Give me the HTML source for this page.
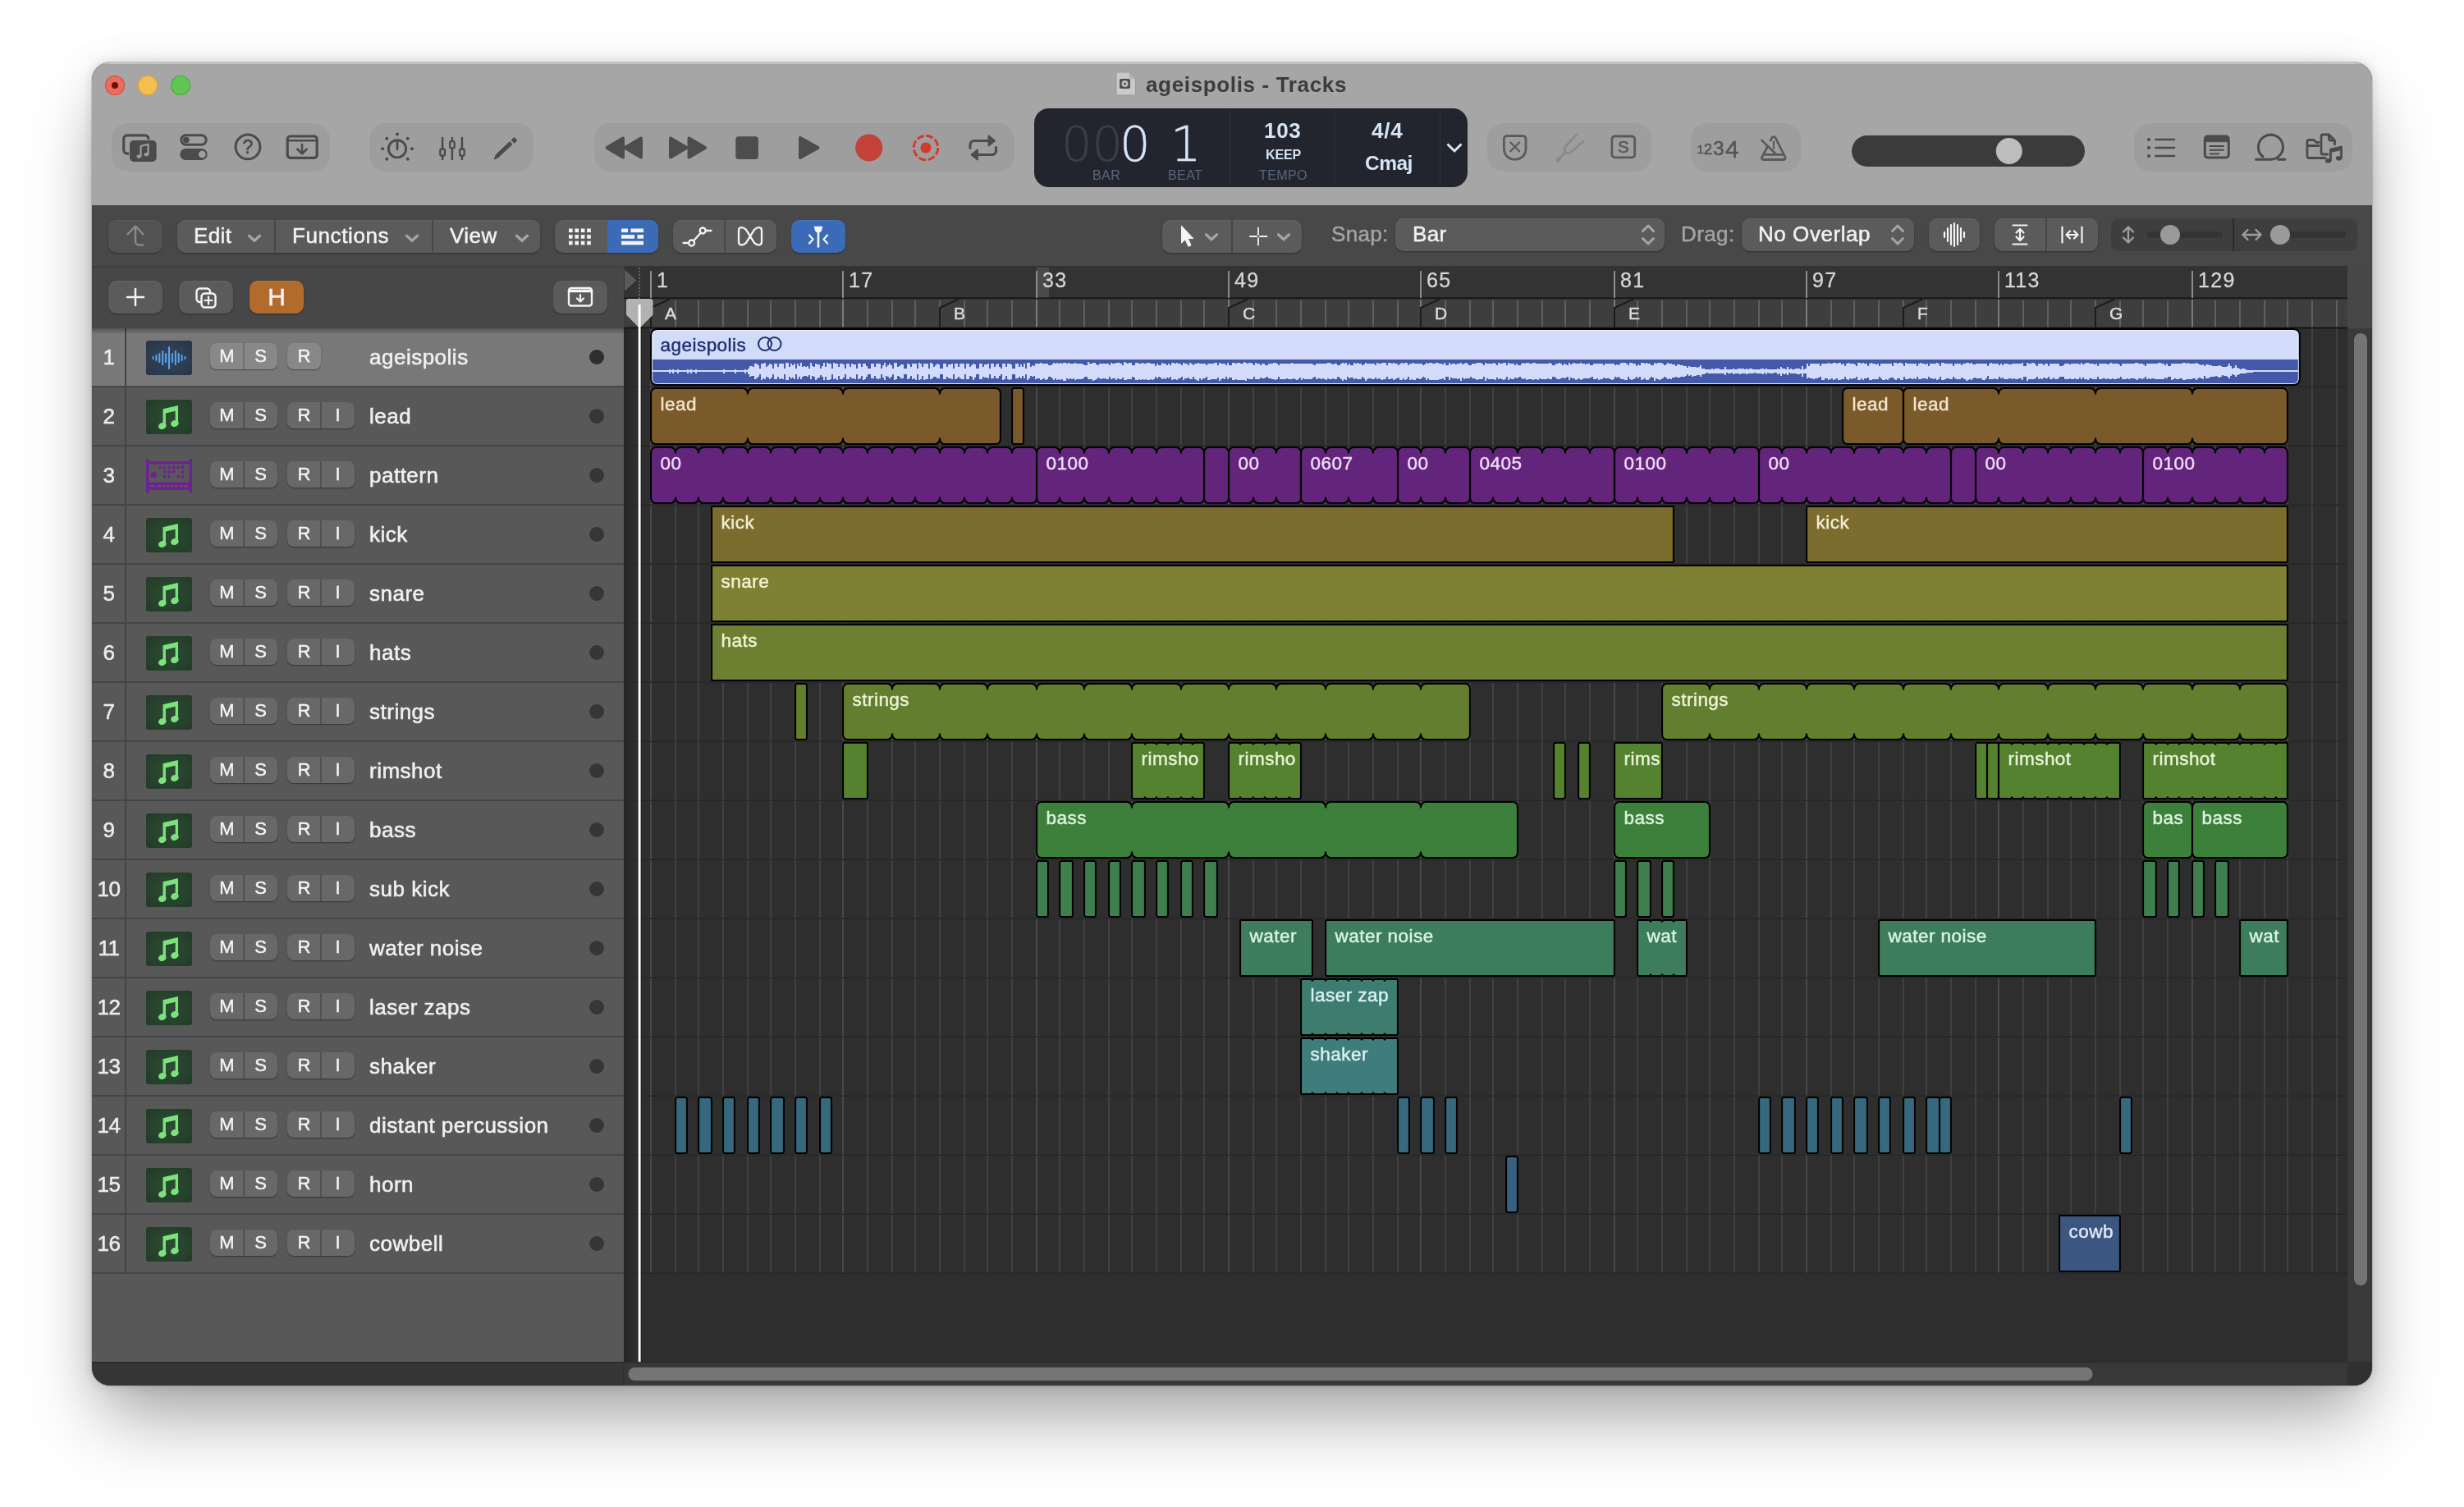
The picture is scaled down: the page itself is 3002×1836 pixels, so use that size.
<!DOCTYPE html>
<html lang="en"><head><meta charset="utf-8"><title>ageispolis - Tracks</title>
<style>
html,body{margin:0;padding:0;}
body{width:3002px;height:1836px;background:#fff;overflow:hidden;position:relative;font-family:"Liberation Sans",sans-serif;}
.win{position:absolute;left:112px;top:76px;width:2778px;height:1612px;border-radius:22px;overflow:hidden;background:#2e2e2e;
 box-shadow:0 0 0 1px rgba(0,0,0,.13),0 0 14px rgba(0,0,0,.15),0 6px 56px rgba(0,0,0,.07),0 50px 90px -12px rgba(0,0,0,.34);}
.inner{will-change:transform;position:absolute;left:-112px;top:-76px;width:3002px;height:1836px;}
.abs{position:absolute;}
.inner div,.inner svg,.inner span{position:absolute;box-sizing:border-box;}
.tb1{left:112px;top:76px;width:2778px;height:174px;background:#a6a6a6;}
.tb1 .hl{left:0;top:0;width:100%;height:2px;background:#c4c4c4;}
.grp{background:#9e9e9e;border-radius:20px;height:59px;top:150px;}
.tl{width:24px;height:24px;border-radius:50%;top:92px;}
.title{top:85px;left:1396px;font-weight:bold;font-size:26px;color:#3c3c3c;white-space:nowrap;line-height:36px;letter-spacing:.65px;}
.lcd{left:1260px;top:132px;width:528px;height:96px;border-radius:18px;background:#22242e;}
.lcd .dv{top:2px;width:1px;height:92px;background:#2f323e;}
.lcd span{white-space:nowrap;color:#d6e4f8;}
.lcd .lab{font-size:16px;color:#5b667b;top:72px;line-height:20px;letter-spacing:.4px;}
.big{-webkit-text-stroke:.5px;font-size:59px;line-height:60px;top:14px;font-family:"DejaVu Sans Light","DejaVu Sans","Liberation Sans",sans-serif;font-weight:200;}
.tb2{left:112px;top:250px;width:2778px;height:74px;background:#484848;}
.tb3{left:112px;top:324px;width:648px;height:76px;background:#474747;border-top:2px solid #3e3e3e;}
.btn{background:#5b5b5b;border-radius:10px;height:40px;top:268px;box-shadow:0 1px 2px rgba(0,0,0,.35),inset 0 1px 0 rgba(255,255,255,.06);}
.btn .dv{top:0;width:2px;height:100%;background:#474747;}
.btn span,.lbl{-webkit-text-stroke:.5px;color:#f2f2f2;font-size:26px;line-height:40px;white-space:nowrap;top:-1px;}
.lbl{color:#a3a3a3;top:266px;}
.blue{background:#3b6bb6;}
.hdr{left:112px;top:400px;width:648px;height:1259px;background:#585858;}
.row{left:112px;width:648px;height:72px;border-bottom:2px solid #454545;}
.row.sel{background:#787878;}
.num{-webkit-text-stroke:.55px;left:-.5px;width:42px;top:0;height:70px;text-align:center;color:#ececec;font-size:26px;line-height:70px;letter-spacing:-.5px;}
.vline{left:40px;top:0;width:2px;height:70px;background:#434343;}
.ico{left:66px;top:15px;width:56px;height:42px;border-radius:3px;}
.ms{top:18px;height:32px;border-radius:8px;background:#686868;box-shadow:0 1px 1.5px rgba(0,0,0,.4);}
.sel .ms{background:#888;}
.ms i{position:absolute;font-style:normal;top:0;width:41px;text-align:center;color:#f4f4f4;font-size:22px;line-height:32px;-webkit-text-stroke:.45px;}
.ms b{position:absolute;top:0;width:2px;height:32px;background:#525252;}
.sel .ms b{background:#707070;}
.nm{-webkit-text-stroke:.55px;left:338px;top:0;color:#f0f0f0;font-size:26px;line-height:70px;white-space:nowrap;letter-spacing:.5px;}
.dot{left:606px;top:26px;width:18px;height:18px;border-radius:50%;background:#363636;}
.sel .dot{background:#2e2e2e;}
svg{overflow:visible;}
svg text{font-family:"Liberation Sans",sans-serif;}
.icoA{background:radial-gradient(ellipse at center,#34465f 0%,#283445 100%);}
.icoN{background:radial-gradient(ellipse at center,#2b4d33 0%,#233a28 100%);}
.hdr .sh{left:0;top:0;width:100%;height:7px;background:linear-gradient(rgba(0,0,0,.28),rgba(0,0,0,0));}

</style></head>
<body>
<div class="win"><div class="inner">
<div class="tb1"><div class="hl"></div></div>
<div class="tl" style="left:128px;background:#ec6a5e;box-shadow:inset 0 0 0 1px #d1503f"></div><div class="tl" style="left:168px;background:#f5bf4f;box-shadow:inset 0 0 0 1px #d9a13a"></div><div class="tl" style="left:208px;background:#61c554;box-shadow:inset 0 0 0 1px #4aa73c"></div><div style="left:136px;top:100px;width:8px;height:8px;border-radius:50%;background:#6a0f09"></div>
<svg style="left:1359px;top:87px" width="26" height="30" viewBox="0 0 26 30"><path d="M2.5 1h14l8 8v18.500a1.500 1.500 0 0 1-1.500 1.500h-20.500a1.500 1.500 0 0 1-1.500-1.500v-25a1.500 1.500 0 0 1 1.500-1.500z" fill="#c9c9c9" stroke="#999" stroke-width="1"/><path d="M16.500 1v6.500a1.500 1.500 0 0 0 1.500 1.500h6.500z" fill="#b4b4b4"/><rect x="5" y="9" width="13" height="12" rx="2" fill="#4d4d4d"/><circle cx="11.500" cy="15" r="4" fill="#bdbdbd"/><circle cx="11.500" cy="15" r="1.500" fill="#555"/></svg><div class="title">ageispolis - Tracks</div>
<div class="grp" style="left:136px;width:266px"></div><div class="grp" style="left:450px;width:200px"></div><div class="grp" style="left:724px;width:512px"></div><div class="grp" style="left:1812px;width:200px"></div><div class="grp" style="left:2060px;width:134px"></div><div class="grp" style="left:2600px;width:266px"></div>
<svg style="left:0;top:0" width="3002" height="260" viewBox="0 0 3002 260" fill="none" stroke="#4b4b4b" stroke-width="3" stroke-linecap="round" stroke-linejoin="round">
<rect x="150.700" y="164.800" width="30.300" height="22.300" rx="4.500" stroke-width="3.200"/><rect x="157" y="170" width="34.600" height="28" rx="6" fill="#9e9e9e" stroke="none"/><rect x="158" y="171" width="32.600" height="26" rx="5" fill="#4b4b4b" stroke="none"/><path d="M171.500 190.500v-12.500l9-2.200v12" stroke="#9e9e9e" stroke-width="2.200"/><ellipse cx="169.300" cy="190.600" rx="2.700" ry="2.100" fill="#9e9e9e" stroke="none"/><ellipse cx="178.300" cy="188.200" rx="2.700" ry="2.100" fill="#9e9e9e" stroke="none"/><rect x="220.800" y="164.700" width="30.400" height="11.600" rx="5.800" stroke-width="3"/><circle cx="226.800" cy="170.500" r="3.800" fill="#4b4b4b" stroke="none"/><rect x="219.300" y="181" width="33.400" height="14" rx="7" fill="#4b4b4b" stroke="none"/><circle cx="246.300" cy="188" r="4.400" fill="#9e9e9e" stroke="none"/><circle cx="302" cy="178.900" r="14.900" stroke-width="3"/><text x="302" y="187.200" text-anchor="middle" font-size="23" fill="#4b4b4b" stroke="#4b4b4b" stroke-width=".7">?</text><rect x="350.200" y="166" width="36" height="26.300" rx="3.500" stroke-width="3.200"/><path d="M351 171.300h34.500" stroke-width="2.400"/><path d="M368 176v10.500M362.300 181.700l5.700 5.500 5.700-5.500" stroke-width="2.600"/><circle cx="484" cy="181.300" r="10.600" stroke-width="2.900"/><path d="M484 172.800v9" stroke-width="2.800"/><circle cx="484.0" cy="163.6" r="2" fill="#4b4b4b" stroke="none"/><circle cx="496.7" cy="168.8" r="2" fill="#4b4b4b" stroke="none"/><circle cx="501.9" cy="181.3" r="2" fill="#4b4b4b" stroke="none"/><circle cx="496.7" cy="193.8" r="2" fill="#4b4b4b" stroke="none"/><circle cx="471.3" cy="193.8" r="2" fill="#4b4b4b" stroke="none"/><circle cx="466.1" cy="181.3" r="2" fill="#4b4b4b" stroke="none"/><circle cx="471.3" cy="168.8" r="2" fill="#4b4b4b" stroke="none"/><path d="M539.1 168v26" stroke-width="2.500"/><rect x="536.3" y="181.5" width="5.600" height="8.200" rx="2" fill="#9e9e9e" stroke-width="2.300"/><path d="M550.9 168v26" stroke-width="2.500"/><rect x="548.1" y="172.2" width="5.600" height="8.200" rx="2" fill="#9e9e9e" stroke-width="2.300"/><path d="M562.9 168v26" stroke-width="2.500"/><rect x="560.1" y="181.5" width="5.600" height="8.200" rx="2" fill="#9e9e9e" stroke-width="2.300"/><path d="M602.300 193.800l2-5.400 16.800-15.800 3 3.200-16.800 15.800z" fill="#4b4b4b" stroke-width="1"/><path d="M623.300 170.400l2.400-2.200a1 1 0 0 1 1.400 0l2.200 2.300a1 1 0 0 1 0 1.400l-2.400 2.200z" fill="#4b4b4b" stroke-width="1"/><g fill="#4d4d4d" stroke="#4d4d4d" stroke-width="4"><path d="M739.5 180.0L759.0 168.5L759.0 191.5z"/><path d="M761.5 180.0L781.0 168.5L781.0 191.5z"/><path d="M836.5 180.0L817.0 168.5L817.0 191.5z"/><path d="M859.0 180.0L839.5 168.5L839.5 191.5z"/><rect x="898.300" y="168.300" width="23.600" height="23.600" rx="1.500"/><path d="M996.5 180.0L975.0 168.0L975.0 192.0z"/></g><circle cx="1058.700" cy="180" r="16.600" fill="#c34238" stroke="none"/><circle cx="1128" cy="180" r="14.800" stroke="#d6392c" stroke-width="3" stroke-dasharray="8.800 2.800" stroke-linecap="butt"/><circle cx="1128" cy="180" r="6.600" fill="#d6392c" stroke="none"/><path d="M1182 180.500v-4a5 5 0 0 1 5-5h18" stroke="#4d4d4d" stroke-width="3.200"/><path d="M1204.500 165.500l7.500 6-7.500 6z" fill="#4d4d4d" stroke="#4d4d4d" stroke-width="2"/><path d="M1213.500 179.500v4a5 5 0 0 1-5 5h-18" stroke="#4d4d4d" stroke-width="3.200"/><path d="M1191 182.500l-7.500 6 7.500 6z" fill="#4d4d4d" stroke="#4d4d4d" stroke-width="2"/><g stroke="#5a5a5a" stroke-width="3"><path d="M1836 165.600h19.400a3.600 3.600 0 0 1 3.600 3.600v12c0 8-6 13-13.300 13s-13.300-5-13.300-13v-12a3.600 3.600 0 0 1 3.600-3.600z" stroke-width="2.800"/><path d="M1840.300 173.500l10.800 10.800M1851.100 173.500l-10.800 10.800" stroke-width="2.300"/><rect x="1963.900" y="166" width="27.800" height="25.800" rx="3.500" stroke-width="2.800"/></g><text x="1977.800" y="186.300" text-anchor="middle" font-size="20.500" fill="#5a5a5a" stroke="#5a5a5a" stroke-width=".7">S</text><g stroke="#8a8a8a" stroke-width="2.800"><path d="M1921.100 163.500l-13.300 14.500c-1.500 1.700-1.700 3-1.600 4.500l.3 3.200 3.500.8c1.500.3 3 0 4.500-1.500l14.600-12.800"/><path d="M1906.500 185.800l-7.500 8" stroke-width="3.200"/><circle cx="1898" cy="195" r="2.700" fill="#8a8a8a" stroke="none"/></g><g fill="#555" stroke="#555" stroke-width=".5"><text x="2067.500" y="186.600" font-size="15">1</text><text x="2075.800" y="187.700" font-size="18.700">2</text><text x="2087" y="188.800" font-size="24.600">3</text><text x="2102" y="191.700" font-size="29.700">4</text></g><g stroke="#5a5a5a" stroke-width="2.800"><path d="M2153.500 178.500l-6.800 13a2 2 0 0 0 1.800 3h24.600a2 2 0 0 0 1.800-3l-11.700-23.500a2.500 2.500 0 0 0-4.500 0l-1.500 3"/><path d="M2149.500 188.300h23.500"/><path d="M2161 172.500v8.500" stroke-width="2.200"/><path d="M2146.500 171l17.500 17" stroke-width="2.600"/></g><rect x="2256" y="165" width="284" height="38" rx="19" fill="#3b3b3b" stroke="none"/><circle cx="2447.800" cy="184" r="16" fill="#bdbdbd" stroke="none"/><g stroke="#4b4b4b" stroke-width="3"><circle cx="2618" cy="170" r="2.100" fill="#4b4b4b" stroke="none"/><path d="M2626.500 170h22.500" stroke-width="2.700"/><circle cx="2618" cy="180" r="2.100" fill="#4b4b4b" stroke="none"/><path d="M2626.500 180h22.500" stroke-width="2.700"/><circle cx="2618" cy="190" r="2.100" fill="#4b4b4b" stroke="none"/><path d="M2626.500 190h22.500" stroke-width="2.700"/><rect x="2686.300" y="166" width="29" height="26" rx="3.500"/><path d="M2686.300 172.300v-2.800a3.500 3.500 0 0 1 3.500-3.500h22a3.500 3.500 0 0 1 3.500 3.500v2.800z" fill="#4b4b4b" stroke-width="1"/><path d="M2692.500 178h16.500M2692.500 182.700h16.500M2692.500 187.400h10.500" stroke-width="2"/><path d="M2748.500 194.200H2765.600A15 15 0 1 0 2757 190.900M2775.500 194.200h8.500" stroke-width="3"/><path d="M2811 177.500v-5a2 2 0 0 1 2-2h6l3 3h3M2811 177.500h14M2811 177.500v13a2 2 0 0 0 2 2h20" stroke-width="2.800"/><path d="M2828 186v-20a2 2 0 0 1 2-2h7.500l7 7v5M2837.500 164v5a2 2 0 0 0 2 2h5M2828 186a2 2 0 0 0 2 2h6" stroke-width="2.800"/><path d="M2839.500 195.500v-13.500l13-3v13.500" stroke-width="2.800"/><path d="M2839.500 182.500l13-3v3l-13 3z" fill="#4b4b4b" stroke-width="1"/><ellipse cx="2836.500" cy="195.800" rx="3.600" ry="2.800" fill="#4b4b4b" stroke="none"/><ellipse cx="2849.500" cy="192.800" rx="3.600" ry="2.800" fill="#4b4b4b" stroke="none"/></g></svg>
<div class="lcd"><div class="dv" style="left:238px"></div><div class="dv" style="left:366px"></div><div class="dv" style="left:494px"></div><span class="big" style="left:33px;color:#3a3e4c">00</span><span class="big" style="left:104px">0</span><span class="big" style="left:166px">1</span><span class="lab" style="left:71px">BAR</span><span class="lab" style="left:163px">BEAT</span><span class="lab" style="left:274px">TEMPO</span><span style="left:280px;top:12px;font-size:26px;font-weight:bold;line-height:30px;letter-spacing:.7px">103</span><span style="left:282px;top:47px;font-size:16px;font-weight:bold;line-height:20px;letter-spacing:-.1px">KEEP</span><span style="left:411px;top:12px;font-size:26px;font-weight:bold;line-height:30px;letter-spacing:.8px">4/4</span><span style="left:403px;top:52px;font-size:24.500px;font-weight:bold;line-height:30px;letter-spacing:-.5px">Cmaj</span><svg style="left:501px;top:40px" width="22" height="16" viewBox="0 0 22 16"><path d="M2.500 3.500l8.500 8.500 8.500-8.500" fill="none" stroke="#d6e4f8" stroke-width="3"/></svg></div>
<div class="tb2"></div><div class="tb3"></div>
<div class="btn" style="left:132px;width:66px;background:#525252"></div><div class="btn" style="left:216px;width:442px"><div class="dv" style="left:118px"></div><div class="dv" style="left:310px"></div><span style="left:20px;letter-spacing:.4px">Edit</span><span style="left:140px;letter-spacing:.6px">Functions</span><span style="left:332px;letter-spacing:.45px">View</span></div><div class="btn" style="left:676px;width:126px"><div class="blue" style="left:64px;top:0;width:62px;height:40px;border-radius:0 10px 10px 0"></div></div><div class="btn" style="left:820px;width:126px"><div class="dv" style="left:62px"></div></div><div class="btn blue" style="left:964px;width:66px"></div><div class="btn" style="left:1416px;width:170px"><div class="dv" style="left:84px"></div></div><span class="lbl" style="left:1622px;letter-spacing:.3px;top:264.500px">Snap:</span><div class="btn" style="left:1700px;width:328px;top:266px"><span style="left:21px;letter-spacing:.4px">Bar</span></div><span class="lbl" style="left:2048px;letter-spacing:.4px;top:264.500px">Drag:</span><div class="btn" style="left:2122px;width:210px;top:266px"><span style="left:20px;letter-spacing:.55px">No Overlap</span></div><div class="btn" style="left:2350px;width:62px;top:266px"></div><div class="btn" style="left:2430px;width:126px;top:266px"><div class="dv" style="left:62px"></div></div><div style="left:2572px;top:266px;width:300px;height:40px;border-radius:10px;background:#3e3e3e"><div style="left:148px;top:0;width:2px;height:40px;background:#2c2c2c"></div><div style="left:44px;top:16px;width:92px;height:8px;border-radius:4px;background:#343434"></div><div style="left:194px;top:16px;width:92px;height:8px;border-radius:4px;background:#343434"></div><div style="left:60px;top:8px;width:24px;height:24px;border-radius:50%;background:#9a9a9a"></div><div style="left:194px;top:8px;width:24px;height:24px;border-radius:50%;background:#9a9a9a"></div></div>
<div class="btn" style="left:132px;width:66px;top:342px"></div><div class="btn" style="left:218px;width:66px;top:342px"></div><div class="btn" style="left:304px;width:66px;top:342px;background:#b36b2d"><span style="left:0;width:66px;text-align:center;font-size:30px;top:0">H</span></div><div class="btn" style="left:674px;width:66px;top:342px"></div>
<svg style="left:0;top:0" width="3002" height="400" viewBox="0 0 3002 400" fill="none" stroke="#f4f4f4" stroke-width="2.600" stroke-linecap="round" stroke-linejoin="round">
<path d="M155.500 285.500l9.500-10 9.500 10M165 276.500v17.500a4.500 4.500 0 0 0 4.500 4.500h4.500" stroke="#8a8a8a" stroke-width="2.400"/><path d="M303.5 287.2l6.5 6.0 6.5 -6.0" stroke="#a5a5a5" stroke-width="3.2" fill="none"/><path d="M495.5 287.2l6.5 6.0 6.5 -6.0" stroke="#a5a5a5" stroke-width="3.2" fill="none"/><path d="M629.5 287.2l6.5 6.0 6.5 -6.0" stroke="#a5a5a5" stroke-width="3.2" fill="none"/><rect x="693.0" y="278.5" width="4.600" height="4.600" fill="#f4f4f4" stroke="none"/><rect x="700.4" y="278.5" width="4.600" height="4.600" fill="#f4f4f4" stroke="none"/><rect x="707.8" y="278.5" width="4.600" height="4.600" fill="#f4f4f4" stroke="none"/><rect x="715.2" y="278.5" width="4.600" height="4.600" fill="#f4f4f4" stroke="none"/><rect x="693.0" y="286.1" width="4.600" height="4.600" fill="#f4f4f4" stroke="none"/><rect x="700.4" y="286.1" width="4.600" height="4.600" fill="#f4f4f4" stroke="none"/><rect x="707.8" y="286.1" width="4.600" height="4.600" fill="#f4f4f4" stroke="none"/><rect x="715.2" y="286.1" width="4.600" height="4.600" fill="#f4f4f4" stroke="none"/><rect x="693.0" y="293.7" width="4.600" height="4.600" fill="#f4f4f4" stroke="none"/><rect x="700.4" y="293.7" width="4.600" height="4.600" fill="#f4f4f4" stroke="none"/><rect x="707.8" y="293.7" width="4.600" height="4.600" fill="#f4f4f4" stroke="none"/><rect x="715.2" y="293.7" width="4.600" height="4.600" fill="#f4f4f4" stroke="none"/><rect x="757.0" y="278.5" width="8.0" height="4.600" fill="#f4f4f4" stroke="none"/><rect x="768.5" y="278.5" width="15.5" height="4.600" fill="#f4f4f4" stroke="none"/><rect x="757.0" y="286.1" width="16.0" height="4.600" fill="#f4f4f4" stroke="none"/><rect x="776.5" y="286.1" width="7.5" height="4.600" fill="#f4f4f4" stroke="none"/><rect x="757.0" y="293.7" width="27.0" height="4.600" fill="#f4f4f4" stroke="none"/><path d="M832.500 296h6.500M845.100 293.200l8.600-9.500M859.800 281h6.700" stroke-width="2.300"/><circle cx="842.600" cy="296" r="3.500" stroke-width="2.300"/><circle cx="856.200" cy="281" r="3.500" stroke-width="2.300"/><path d="M900 281C900 276 905 276.300 909 279.800L919 295.800C923 299.300 928 299.600 928 294.600V281C928 276 923 276.300 919 279.800L909 295.800C905 299.300 900 299.600 900 294.600Z" stroke-width="2.300"/><path d="M992.500 276.500h9l-1.500 5-3 2-3-2z" fill="#f4f4f4" stroke-width="1.500"/><path d="M997 283v17.500" stroke-width="2.600"/><path d="M986 286.500l4.500 5-4.500 5M1008 286.500l-4.500 5 4.500 5" stroke-width="2.200"/><path d="M1439.500 275.500v20.500l4.600-4.300 3.800 8.600 3.200-1.500-3.800-8.400h6.200z" fill="#f4f4f4" stroke-width="1"/><path d="M1469.5 285.8l6.5 6.0 6.5 -6.0" stroke="#a5a5a5" stroke-width="3.2" fill="none"/><path d="M1533 277.500v8.500M1533 290v8.500M1523 288h8M1535 288h8.500" stroke-width="1.800"/><path d="M1557.5 285.8l6.5 6.0 6.5 -6.0" stroke="#a5a5a5" stroke-width="3.2" fill="none"/><path d="M2001.5 281.5l6.500 -6.500 6.500 6.500M2001.5 290.5l6.500 6.500 6.500 -6.500" stroke="#a5a5a5" stroke-width="3" fill="none"/><path d="M2305.5 281.5l6.500 -6.500 6.500 6.500M2305.5 290.5l6.500 6.500 6.500 -6.500" stroke="#a5a5a5" stroke-width="3" fill="none"/><path d="M2369.0 283.0v6.0" stroke-width="2.200"/><path d="M2373.0 278.0v16.0" stroke-width="2.200"/><path d="M2377.0 274.0v24.0" stroke-width="2.200"/><path d="M2381.0 272.0v28.0" stroke-width="2.200"/><path d="M2385.0 274.0v24.0" stroke-width="2.200"/><path d="M2389.0 278.0v16.0" stroke-width="2.200"/><path d="M2393.0 283.0v6.0" stroke-width="2.200"/><path d="M2452.500 274.500h17M2452.500 297.500h17" stroke-width="2.200"/><path d="M2461 279.500v13M2456.500 283.500l4.500-4.500 4.500 4.500M2456.500 288.500l4.500 4.500 4.500-4.500" stroke-width="2.200"/><path d="M2512.500 276.500v19M2536.500 276.500v19" stroke-width="2.200"/><path d="M2518 286h13M2522 281.500l-4.500 4.500 4.500 4.500M2527 281.500l4.500 4.500-4.500 4.500" stroke-width="2.200"/><g stroke="#9e9e9e" stroke-width="2.400"><path d="M2593 277v18M2587 282.500l6-6 6 6M2587 289.500l6 6 6-6"/><path d="M2733 286h21M2738.500 280l-6 6 6 6M2748.500 280l6 6-6 6"/></g><path d="M165 352v20M155 362h20" stroke-width="2.500"/><rect x="239.500" y="351.500" width="16.500" height="16.500" rx="4" stroke-width="2.400"/><rect x="245.500" y="357.500" width="17" height="17" rx="4" fill="#5b5b5b" stroke-width="2.400"/><path d="M254 361.500v9M249.500 366h9" stroke-width="2.200"/><rect x="693" y="351" width="28" height="21.500" rx="3" stroke-width="2.400"/><path d="M693.500 354.500h27" stroke-width="3.600"/><path d="M707 359v8M703 363.500l4 4 4-4" stroke-width="2.200"/></svg>
<div class="hdr"></div>
<div style="left:112px;top:1659px;width:648px;height:29px;background:#363636;border-top:2px solid #2c2c2c"></div><div class="row sel" style="top:400px"><div class="num">1</div><div class="vline"></div><svg class="ico icoA" viewBox="0 0 56 42"><g stroke="#5aa4ee" stroke-width="2" stroke-linecap="round"><path d="M8.5 20.0v2.0"/><path d="M12.4 18.0v6.0"/><path d="M16.3 16.0v10.0"/><path d="M20.2 13.0v16.0"/><path d="M24.1 16.0v10.0"/><path d="M28.0 8.0v26.0"/><path d="M31.9 16.0v10.0"/><path d="M35.8 13.0v16.0"/><path d="M39.7 16.0v10.0"/><path d="M43.6 18.0v6.0"/><path d="M47.5 20.0v2.0"/></g></svg><div class="ms" style="left:144px;width:82px"><i style="left:0">M</i><b style="left:40px"></b><i style="left:41px">S</i></div><div class="ms" style="left:238px;width:41px"><i style="left:0">R</i></div><div class="nm">ageispolis</div><div class="dot"></div></div>
<div class="row" style="top:472px"><div class="num">2</div><div class="vline"></div><svg class="ico icoN" viewBox="0 0 56 42"><g fill="#7ce27b"><path d="M20.500 11.200l18.500-4.200v22.200h-3.400v-15.400l-11.700 2.700v15.700h-3.400z"/><ellipse cx="19.800" cy="32" rx="4.900" ry="3.900" transform="rotate(-18 19.800 32)"/><ellipse cx="34.900" cy="29" rx="4.900" ry="3.900" transform="rotate(-18 34.900 29)"/></g></svg><div class="ms" style="left:144px;width:82px"><i style="left:0">M</i><b style="left:40px"></b><i style="left:41px">S</i></div><div class="ms" style="left:238px;width:82px"><i style="left:0">R</i><b style="left:40px"></b><i style="left:41px">I</i></div><div class="nm">lead</div><div class="dot"></div></div>
<div class="row" style="top:544px"><div class="num">3</div><div class="vline"></div><svg class="ico" viewBox="0 0 56 42"><g fill="#6e2291"><rect x="0" y="0.500" width="3.600" height="41"/><rect x="52.400" y="0.500" width="3.600" height="41"/><rect x="0" y="3" width="56" height="3.400"/><rect x="0" y="28.500" width="56" height="9.500"/><circle cx="9.500" cy="19.500" r="3.800"/><circle cx="17.0" cy="10.5" r="1.900"/><circle cx="22.5" cy="10.5" r="1.900"/><circle cx="28.0" cy="10.5" r="1.900"/><circle cx="33.5" cy="10.5" r="1.900"/><circle cx="39.0" cy="10.5" r="1.900"/><circle cx="44.5" cy="10.5" r="1.900"/><circle cx="22.5" cy="16.0" r="1.900"/><circle cx="28.0" cy="16.0" r="1.900"/><circle cx="33.5" cy="15.5" r="1.900"/><circle cx="44.5" cy="16.0" r="1.900"/><circle cx="22.5" cy="21.5" r="1.900"/><circle cx="28.0" cy="21.5" r="1.900"/><circle cx="39.0" cy="21.5" r="1.900"/><circle cx="44.5" cy="21.5" r="1.900"/></g><g fill="#585858"><rect x="5" y="32" width="5.500" height="2.600"/><rect x="14.5" y="32" width="3.400" height="2.600"/><rect x="19.7" y="32" width="3.400" height="2.600"/><rect x="24.9" y="32" width="3.400" height="2.600"/><rect x="30.1" y="32" width="3.400" height="2.600"/><rect x="35.3" y="32" width="3.400" height="2.600"/><rect x="40.5" y="32" width="3.400" height="2.600"/><rect x="45.500" y="32" width="5.500" height="2.600"/></g></svg><div class="ms" style="left:144px;width:82px"><i style="left:0">M</i><b style="left:40px"></b><i style="left:41px">S</i></div><div class="ms" style="left:238px;width:82px"><i style="left:0">R</i><b style="left:40px"></b><i style="left:41px">I</i></div><div class="nm">pattern</div><div class="dot"></div></div>
<div class="row" style="top:616px"><div class="num">4</div><div class="vline"></div><svg class="ico icoN" viewBox="0 0 56 42"><g fill="#7ce27b"><path d="M20.500 11.200l18.500-4.200v22.200h-3.400v-15.400l-11.700 2.700v15.700h-3.400z"/><ellipse cx="19.800" cy="32" rx="4.900" ry="3.900" transform="rotate(-18 19.800 32)"/><ellipse cx="34.900" cy="29" rx="4.900" ry="3.900" transform="rotate(-18 34.900 29)"/></g></svg><div class="ms" style="left:144px;width:82px"><i style="left:0">M</i><b style="left:40px"></b><i style="left:41px">S</i></div><div class="ms" style="left:238px;width:82px"><i style="left:0">R</i><b style="left:40px"></b><i style="left:41px">I</i></div><div class="nm">kick</div><div class="dot"></div></div>
<div class="row" style="top:688px"><div class="num">5</div><div class="vline"></div><svg class="ico icoN" viewBox="0 0 56 42"><g fill="#7ce27b"><path d="M20.500 11.200l18.500-4.200v22.200h-3.400v-15.400l-11.700 2.700v15.700h-3.400z"/><ellipse cx="19.800" cy="32" rx="4.900" ry="3.900" transform="rotate(-18 19.800 32)"/><ellipse cx="34.900" cy="29" rx="4.900" ry="3.900" transform="rotate(-18 34.900 29)"/></g></svg><div class="ms" style="left:144px;width:82px"><i style="left:0">M</i><b style="left:40px"></b><i style="left:41px">S</i></div><div class="ms" style="left:238px;width:82px"><i style="left:0">R</i><b style="left:40px"></b><i style="left:41px">I</i></div><div class="nm">snare</div><div class="dot"></div></div>
<div class="row" style="top:760px"><div class="num">6</div><div class="vline"></div><svg class="ico icoN" viewBox="0 0 56 42"><g fill="#7ce27b"><path d="M20.500 11.200l18.500-4.200v22.200h-3.400v-15.400l-11.700 2.700v15.700h-3.400z"/><ellipse cx="19.800" cy="32" rx="4.900" ry="3.900" transform="rotate(-18 19.800 32)"/><ellipse cx="34.900" cy="29" rx="4.900" ry="3.900" transform="rotate(-18 34.900 29)"/></g></svg><div class="ms" style="left:144px;width:82px"><i style="left:0">M</i><b style="left:40px"></b><i style="left:41px">S</i></div><div class="ms" style="left:238px;width:82px"><i style="left:0">R</i><b style="left:40px"></b><i style="left:41px">I</i></div><div class="nm">hats</div><div class="dot"></div></div>
<div class="row" style="top:832px"><div class="num">7</div><div class="vline"></div><svg class="ico icoN" viewBox="0 0 56 42"><g fill="#7ce27b"><path d="M20.500 11.200l18.500-4.200v22.200h-3.400v-15.400l-11.700 2.700v15.700h-3.400z"/><ellipse cx="19.800" cy="32" rx="4.900" ry="3.900" transform="rotate(-18 19.800 32)"/><ellipse cx="34.900" cy="29" rx="4.900" ry="3.900" transform="rotate(-18 34.900 29)"/></g></svg><div class="ms" style="left:144px;width:82px"><i style="left:0">M</i><b style="left:40px"></b><i style="left:41px">S</i></div><div class="ms" style="left:238px;width:82px"><i style="left:0">R</i><b style="left:40px"></b><i style="left:41px">I</i></div><div class="nm">strings</div><div class="dot"></div></div>
<div class="row" style="top:904px"><div class="num">8</div><div class="vline"></div><svg class="ico icoN" viewBox="0 0 56 42"><g fill="#7ce27b"><path d="M20.500 11.200l18.500-4.200v22.200h-3.400v-15.400l-11.700 2.700v15.700h-3.400z"/><ellipse cx="19.800" cy="32" rx="4.900" ry="3.900" transform="rotate(-18 19.800 32)"/><ellipse cx="34.900" cy="29" rx="4.900" ry="3.900" transform="rotate(-18 34.900 29)"/></g></svg><div class="ms" style="left:144px;width:82px"><i style="left:0">M</i><b style="left:40px"></b><i style="left:41px">S</i></div><div class="ms" style="left:238px;width:82px"><i style="left:0">R</i><b style="left:40px"></b><i style="left:41px">I</i></div><div class="nm">rimshot</div><div class="dot"></div></div>
<div class="row" style="top:976px"><div class="num">9</div><div class="vline"></div><svg class="ico icoN" viewBox="0 0 56 42"><g fill="#7ce27b"><path d="M20.500 11.200l18.500-4.200v22.200h-3.400v-15.400l-11.700 2.700v15.700h-3.400z"/><ellipse cx="19.800" cy="32" rx="4.900" ry="3.900" transform="rotate(-18 19.800 32)"/><ellipse cx="34.900" cy="29" rx="4.900" ry="3.900" transform="rotate(-18 34.900 29)"/></g></svg><div class="ms" style="left:144px;width:82px"><i style="left:0">M</i><b style="left:40px"></b><i style="left:41px">S</i></div><div class="ms" style="left:238px;width:82px"><i style="left:0">R</i><b style="left:40px"></b><i style="left:41px">I</i></div><div class="nm">bass</div><div class="dot"></div></div>
<div class="row" style="top:1048px"><div class="num">10</div><div class="vline"></div><svg class="ico icoN" viewBox="0 0 56 42"><g fill="#7ce27b"><path d="M20.500 11.200l18.500-4.200v22.200h-3.400v-15.400l-11.700 2.700v15.700h-3.400z"/><ellipse cx="19.800" cy="32" rx="4.900" ry="3.900" transform="rotate(-18 19.800 32)"/><ellipse cx="34.900" cy="29" rx="4.900" ry="3.900" transform="rotate(-18 34.900 29)"/></g></svg><div class="ms" style="left:144px;width:82px"><i style="left:0">M</i><b style="left:40px"></b><i style="left:41px">S</i></div><div class="ms" style="left:238px;width:82px"><i style="left:0">R</i><b style="left:40px"></b><i style="left:41px">I</i></div><div class="nm">sub kick</div><div class="dot"></div></div>
<div class="row" style="top:1120px"><div class="num">11</div><div class="vline"></div><svg class="ico icoN" viewBox="0 0 56 42"><g fill="#7ce27b"><path d="M20.500 11.200l18.500-4.200v22.200h-3.400v-15.400l-11.700 2.700v15.700h-3.400z"/><ellipse cx="19.800" cy="32" rx="4.900" ry="3.900" transform="rotate(-18 19.800 32)"/><ellipse cx="34.900" cy="29" rx="4.900" ry="3.900" transform="rotate(-18 34.900 29)"/></g></svg><div class="ms" style="left:144px;width:82px"><i style="left:0">M</i><b style="left:40px"></b><i style="left:41px">S</i></div><div class="ms" style="left:238px;width:82px"><i style="left:0">R</i><b style="left:40px"></b><i style="left:41px">I</i></div><div class="nm">water noise</div><div class="dot"></div></div>
<div class="row" style="top:1192px"><div class="num">12</div><div class="vline"></div><svg class="ico icoN" viewBox="0 0 56 42"><g fill="#7ce27b"><path d="M20.500 11.200l18.500-4.200v22.200h-3.400v-15.400l-11.700 2.700v15.700h-3.400z"/><ellipse cx="19.800" cy="32" rx="4.900" ry="3.900" transform="rotate(-18 19.800 32)"/><ellipse cx="34.900" cy="29" rx="4.900" ry="3.900" transform="rotate(-18 34.900 29)"/></g></svg><div class="ms" style="left:144px;width:82px"><i style="left:0">M</i><b style="left:40px"></b><i style="left:41px">S</i></div><div class="ms" style="left:238px;width:82px"><i style="left:0">R</i><b style="left:40px"></b><i style="left:41px">I</i></div><div class="nm">laser zaps</div><div class="dot"></div></div>
<div class="row" style="top:1264px"><div class="num">13</div><div class="vline"></div><svg class="ico icoN" viewBox="0 0 56 42"><g fill="#7ce27b"><path d="M20.500 11.200l18.500-4.200v22.200h-3.400v-15.400l-11.700 2.700v15.700h-3.400z"/><ellipse cx="19.800" cy="32" rx="4.900" ry="3.900" transform="rotate(-18 19.800 32)"/><ellipse cx="34.900" cy="29" rx="4.900" ry="3.900" transform="rotate(-18 34.900 29)"/></g></svg><div class="ms" style="left:144px;width:82px"><i style="left:0">M</i><b style="left:40px"></b><i style="left:41px">S</i></div><div class="ms" style="left:238px;width:82px"><i style="left:0">R</i><b style="left:40px"></b><i style="left:41px">I</i></div><div class="nm">shaker</div><div class="dot"></div></div>
<div class="row" style="top:1336px"><div class="num">14</div><div class="vline"></div><svg class="ico icoN" viewBox="0 0 56 42"><g fill="#7ce27b"><path d="M20.500 11.200l18.500-4.200v22.200h-3.400v-15.400l-11.700 2.700v15.700h-3.400z"/><ellipse cx="19.800" cy="32" rx="4.900" ry="3.900" transform="rotate(-18 19.800 32)"/><ellipse cx="34.900" cy="29" rx="4.900" ry="3.900" transform="rotate(-18 34.900 29)"/></g></svg><div class="ms" style="left:144px;width:82px"><i style="left:0">M</i><b style="left:40px"></b><i style="left:41px">S</i></div><div class="ms" style="left:238px;width:82px"><i style="left:0">R</i><b style="left:40px"></b><i style="left:41px">I</i></div><div class="nm">distant percussion</div><div class="dot"></div></div>
<div class="row" style="top:1408px"><div class="num">15</div><div class="vline"></div><svg class="ico icoN" viewBox="0 0 56 42"><g fill="#7ce27b"><path d="M20.500 11.200l18.500-4.200v22.200h-3.400v-15.400l-11.700 2.700v15.700h-3.400z"/><ellipse cx="19.800" cy="32" rx="4.900" ry="3.900" transform="rotate(-18 19.800 32)"/><ellipse cx="34.900" cy="29" rx="4.900" ry="3.900" transform="rotate(-18 34.900 29)"/></g></svg><div class="ms" style="left:144px;width:82px"><i style="left:0">M</i><b style="left:40px"></b><i style="left:41px">S</i></div><div class="ms" style="left:238px;width:82px"><i style="left:0">R</i><b style="left:40px"></b><i style="left:41px">I</i></div><div class="nm">horn</div><div class="dot"></div></div>
<div class="row" style="top:1480px"><div class="num">16</div><div class="vline"></div><svg class="ico icoN" viewBox="0 0 56 42"><g fill="#7ce27b"><path d="M20.500 11.200l18.500-4.200v22.200h-3.400v-15.400l-11.700 2.700v15.700h-3.400z"/><ellipse cx="19.800" cy="32" rx="4.900" ry="3.900" transform="rotate(-18 19.800 32)"/><ellipse cx="34.900" cy="29" rx="4.900" ry="3.900" transform="rotate(-18 34.900 29)"/></g></svg><div class="ms" style="left:144px;width:82px"><i style="left:0">M</i><b style="left:40px"></b><i style="left:41px">S</i></div><div class="ms" style="left:238px;width:82px"><i style="left:0">R</i><b style="left:40px"></b><i style="left:41px">I</i></div><div class="nm">cowbell</div><div class="dot"></div></div>
<div class="sh" style="left:112px;top:400px;width:648px;height:7px;background:linear-gradient(rgba(0,0,0,.3),rgba(0,0,0,0))"></div>
<svg style="left:0;top:0" width="3002" height="1836" viewBox="0 0 3002 1836">
<rect x="760" y="324" width="2130" height="1364" fill="#2e2e2e"/><linearGradient id="pg" x1="0" x2="1" y1="0" y2="0"><stop offset="0" stop-color="#000" stop-opacity=".22"/><stop offset="1" stop-color="#000" stop-opacity="0"/></linearGradient><rect x="760" y="400" width="12" height="1259" fill="url(#pg)"/><rect x="760" y="324" width="2100" height="39" fill="#333"/><rect x="760" y="364" width="2100" height="36" fill="#3e3e3e"/><rect x="760" y="362.300" width="2100" height="2" fill="#181818"/><rect x="2860" y="324" width="30" height="76" fill="#474747"/><rect x="2860" y="400" width="30" height="1259" fill="#3a3a3a"/><path d="M793 400V1552" stroke="#505050" stroke-width="1.600"/><path d="M823 400V1552" stroke="#464646" stroke-width="1.600"/><path d="M851 400V1552" stroke="#464646" stroke-width="1.600"/><path d="M881 400V1552" stroke="#464646" stroke-width="1.600"/><path d="M911 400V1552" stroke="#464646" stroke-width="1.600"/><path d="M939 400V1552" stroke="#464646" stroke-width="1.600"/><path d="M969 400V1552" stroke="#464646" stroke-width="1.600"/><path d="M999 400V1552" stroke="#464646" stroke-width="1.600"/><path d="M1027 400V1552" stroke="#505050" stroke-width="1.600"/><path d="M1057 400V1552" stroke="#464646" stroke-width="1.600"/><path d="M1087 400V1552" stroke="#464646" stroke-width="1.600"/><path d="M1115 400V1552" stroke="#464646" stroke-width="1.600"/><path d="M1145 400V1552" stroke="#464646" stroke-width="1.600"/><path d="M1175 400V1552" stroke="#464646" stroke-width="1.600"/><path d="M1203 400V1552" stroke="#464646" stroke-width="1.600"/><path d="M1233 400V1552" stroke="#464646" stroke-width="1.600"/><path d="M1263 400V1552" stroke="#505050" stroke-width="1.600"/><path d="M1291 400V1552" stroke="#464646" stroke-width="1.600"/><path d="M1321 400V1552" stroke="#464646" stroke-width="1.600"/><path d="M1351 400V1552" stroke="#464646" stroke-width="1.600"/><path d="M1379 400V1552" stroke="#464646" stroke-width="1.600"/><path d="M1409 400V1552" stroke="#464646" stroke-width="1.600"/><path d="M1439 400V1552" stroke="#464646" stroke-width="1.600"/><path d="M1467 400V1552" stroke="#464646" stroke-width="1.600"/><path d="M1497 400V1552" stroke="#505050" stroke-width="1.600"/><path d="M1527 400V1552" stroke="#464646" stroke-width="1.600"/><path d="M1555 400V1552" stroke="#464646" stroke-width="1.600"/><path d="M1585 400V1552" stroke="#464646" stroke-width="1.600"/><path d="M1615 400V1552" stroke="#464646" stroke-width="1.600"/><path d="M1643 400V1552" stroke="#464646" stroke-width="1.600"/><path d="M1673 400V1552" stroke="#464646" stroke-width="1.600"/><path d="M1703 400V1552" stroke="#464646" stroke-width="1.600"/><path d="M1731 400V1552" stroke="#505050" stroke-width="1.600"/><path d="M1761 400V1552" stroke="#464646" stroke-width="1.600"/><path d="M1791 400V1552" stroke="#464646" stroke-width="1.600"/><path d="M1819 400V1552" stroke="#464646" stroke-width="1.600"/><path d="M1849 400V1552" stroke="#464646" stroke-width="1.600"/><path d="M1879 400V1552" stroke="#464646" stroke-width="1.600"/><path d="M1907 400V1552" stroke="#464646" stroke-width="1.600"/><path d="M1937 400V1552" stroke="#464646" stroke-width="1.600"/><path d="M1967 400V1552" stroke="#505050" stroke-width="1.600"/><path d="M1995 400V1552" stroke="#464646" stroke-width="1.600"/><path d="M2025 400V1552" stroke="#464646" stroke-width="1.600"/><path d="M2055 400V1552" stroke="#464646" stroke-width="1.600"/><path d="M2083 400V1552" stroke="#464646" stroke-width="1.600"/><path d="M2113 400V1552" stroke="#464646" stroke-width="1.600"/><path d="M2143 400V1552" stroke="#464646" stroke-width="1.600"/><path d="M2171 400V1552" stroke="#464646" stroke-width="1.600"/><path d="M2201 400V1552" stroke="#505050" stroke-width="1.600"/><path d="M2231 400V1552" stroke="#464646" stroke-width="1.600"/><path d="M2259 400V1552" stroke="#464646" stroke-width="1.600"/><path d="M2289 400V1552" stroke="#464646" stroke-width="1.600"/><path d="M2319 400V1552" stroke="#464646" stroke-width="1.600"/><path d="M2347 400V1552" stroke="#464646" stroke-width="1.600"/><path d="M2377 400V1552" stroke="#464646" stroke-width="1.600"/><path d="M2407 400V1552" stroke="#464646" stroke-width="1.600"/><path d="M2435 400V1552" stroke="#505050" stroke-width="1.600"/><path d="M2465 400V1552" stroke="#464646" stroke-width="1.600"/><path d="M2495 400V1552" stroke="#464646" stroke-width="1.600"/><path d="M2523 400V1552" stroke="#464646" stroke-width="1.600"/><path d="M2553 400V1552" stroke="#464646" stroke-width="1.600"/><path d="M2583 400V1552" stroke="#464646" stroke-width="1.600"/><path d="M2611 400V1552" stroke="#464646" stroke-width="1.600"/><path d="M2641 400V1552" stroke="#464646" stroke-width="1.600"/><path d="M2671 400V1552" stroke="#505050" stroke-width="1.600"/><path d="M2699 400V1552" stroke="#464646" stroke-width="1.600"/><path d="M2729 400V1552" stroke="#464646" stroke-width="1.600"/><path d="M2759 400V1552" stroke="#464646" stroke-width="1.600"/><path d="M2787 400V1552" stroke="#464646" stroke-width="1.600"/><path d="M2817 400V1552" stroke="#464646" stroke-width="1.600"/><path d="M2847 400V1552" stroke="#464646" stroke-width="1.600"/>
<path d="M760 471.2H2860" stroke="#272727" stroke-width="1.600"/><path d="M760 543.2H2860" stroke="#272727" stroke-width="1.600"/><path d="M760 615.2H2860" stroke="#272727" stroke-width="1.600"/><path d="M760 687.2H2860" stroke="#272727" stroke-width="1.600"/><path d="M760 759.2H2860" stroke="#272727" stroke-width="1.600"/><path d="M760 831.2H2860" stroke="#272727" stroke-width="1.600"/><path d="M760 903.2H2860" stroke="#272727" stroke-width="1.600"/><path d="M760 975.2H2860" stroke="#272727" stroke-width="1.600"/><path d="M760 1047.2H2860" stroke="#272727" stroke-width="1.600"/><path d="M760 1119.2H2860" stroke="#272727" stroke-width="1.600"/><path d="M760 1191.2H2860" stroke="#272727" stroke-width="1.600"/><path d="M760 1263.2H2860" stroke="#272727" stroke-width="1.600"/><path d="M760 1335.2H2860" stroke="#272727" stroke-width="1.600"/><path d="M760 1407.2H2860" stroke="#272727" stroke-width="1.600"/><path d="M760 1479.2H2860" stroke="#272727" stroke-width="1.600"/><path d="M760 1551.2H2860" stroke="#272727" stroke-width="1.600"/>
<rect x="1263" y="326" width="15" height="36.300" fill="#4b4b4b"/><path d="M793 330V363" stroke="#8c8c8c" stroke-width="2"/><path d="M793 365V400" stroke="#7a7a7a" stroke-width="2"/><text x="800" y="350" font-size="25" letter-spacing="1.300" fill="#d6d6d6" stroke="#d6d6d6" stroke-width=".3">1</text><path d="M823 366V400" stroke="#6b6b6b" stroke-width="1.500"/><path d="M851 366V400" stroke="#6b6b6b" stroke-width="1.500"/><path d="M881 366V400" stroke="#6b6b6b" stroke-width="1.500"/><path d="M911 366V400" stroke="#6b6b6b" stroke-width="1.500"/><path d="M939 366V400" stroke="#6b6b6b" stroke-width="1.500"/><path d="M969 366V400" stroke="#6b6b6b" stroke-width="1.500"/><path d="M999 366V400" stroke="#6b6b6b" stroke-width="1.500"/><path d="M1027 330V363" stroke="#8c8c8c" stroke-width="2"/><path d="M1027 365V400" stroke="#7a7a7a" stroke-width="2"/><text x="1034" y="350" font-size="25" letter-spacing="1.300" fill="#d6d6d6" stroke="#d6d6d6" stroke-width=".3">17</text><path d="M1057 366V400" stroke="#6b6b6b" stroke-width="1.500"/><path d="M1087 366V400" stroke="#6b6b6b" stroke-width="1.500"/><path d="M1115 366V400" stroke="#6b6b6b" stroke-width="1.500"/><path d="M1145 366V400" stroke="#6b6b6b" stroke-width="1.500"/><path d="M1175 366V400" stroke="#6b6b6b" stroke-width="1.500"/><path d="M1203 366V400" stroke="#6b6b6b" stroke-width="1.500"/><path d="M1233 366V400" stroke="#6b6b6b" stroke-width="1.500"/><path d="M1263 330V363" stroke="#8c8c8c" stroke-width="2"/><path d="M1263 365V400" stroke="#7a7a7a" stroke-width="2"/><text x="1270" y="350" font-size="25" letter-spacing="1.300" fill="#d6d6d6" stroke="#d6d6d6" stroke-width=".3">33</text><path d="M1291 366V400" stroke="#6b6b6b" stroke-width="1.500"/><path d="M1321 366V400" stroke="#6b6b6b" stroke-width="1.500"/><path d="M1351 366V400" stroke="#6b6b6b" stroke-width="1.500"/><path d="M1379 366V400" stroke="#6b6b6b" stroke-width="1.500"/><path d="M1409 366V400" stroke="#6b6b6b" stroke-width="1.500"/><path d="M1439 366V400" stroke="#6b6b6b" stroke-width="1.500"/><path d="M1467 366V400" stroke="#6b6b6b" stroke-width="1.500"/><path d="M1497 330V363" stroke="#8c8c8c" stroke-width="2"/><path d="M1497 365V400" stroke="#7a7a7a" stroke-width="2"/><text x="1504" y="350" font-size="25" letter-spacing="1.300" fill="#d6d6d6" stroke="#d6d6d6" stroke-width=".3">49</text><path d="M1527 366V400" stroke="#6b6b6b" stroke-width="1.500"/><path d="M1555 366V400" stroke="#6b6b6b" stroke-width="1.500"/><path d="M1585 366V400" stroke="#6b6b6b" stroke-width="1.500"/><path d="M1615 366V400" stroke="#6b6b6b" stroke-width="1.500"/><path d="M1643 366V400" stroke="#6b6b6b" stroke-width="1.500"/><path d="M1673 366V400" stroke="#6b6b6b" stroke-width="1.500"/><path d="M1703 366V400" stroke="#6b6b6b" stroke-width="1.500"/><path d="M1731 330V363" stroke="#8c8c8c" stroke-width="2"/><path d="M1731 365V400" stroke="#7a7a7a" stroke-width="2"/><text x="1738" y="350" font-size="25" letter-spacing="1.300" fill="#d6d6d6" stroke="#d6d6d6" stroke-width=".3">65</text><path d="M1761 366V400" stroke="#6b6b6b" stroke-width="1.500"/><path d="M1791 366V400" stroke="#6b6b6b" stroke-width="1.500"/><path d="M1819 366V400" stroke="#6b6b6b" stroke-width="1.500"/><path d="M1849 366V400" stroke="#6b6b6b" stroke-width="1.500"/><path d="M1879 366V400" stroke="#6b6b6b" stroke-width="1.500"/><path d="M1907 366V400" stroke="#6b6b6b" stroke-width="1.500"/><path d="M1937 366V400" stroke="#6b6b6b" stroke-width="1.500"/><path d="M1967 330V363" stroke="#8c8c8c" stroke-width="2"/><path d="M1967 365V400" stroke="#7a7a7a" stroke-width="2"/><text x="1974" y="350" font-size="25" letter-spacing="1.300" fill="#d6d6d6" stroke="#d6d6d6" stroke-width=".3">81</text><path d="M1995 366V400" stroke="#6b6b6b" stroke-width="1.500"/><path d="M2025 366V400" stroke="#6b6b6b" stroke-width="1.500"/><path d="M2055 366V400" stroke="#6b6b6b" stroke-width="1.500"/><path d="M2083 366V400" stroke="#6b6b6b" stroke-width="1.500"/><path d="M2113 366V400" stroke="#6b6b6b" stroke-width="1.500"/><path d="M2143 366V400" stroke="#6b6b6b" stroke-width="1.500"/><path d="M2171 366V400" stroke="#6b6b6b" stroke-width="1.500"/><path d="M2201 330V363" stroke="#8c8c8c" stroke-width="2"/><path d="M2201 365V400" stroke="#7a7a7a" stroke-width="2"/><text x="2208" y="350" font-size="25" letter-spacing="1.300" fill="#d6d6d6" stroke="#d6d6d6" stroke-width=".3">97</text><path d="M2231 366V400" stroke="#6b6b6b" stroke-width="1.500"/><path d="M2259 366V400" stroke="#6b6b6b" stroke-width="1.500"/><path d="M2289 366V400" stroke="#6b6b6b" stroke-width="1.500"/><path d="M2319 366V400" stroke="#6b6b6b" stroke-width="1.500"/><path d="M2347 366V400" stroke="#6b6b6b" stroke-width="1.500"/><path d="M2377 366V400" stroke="#6b6b6b" stroke-width="1.500"/><path d="M2407 366V400" stroke="#6b6b6b" stroke-width="1.500"/><path d="M2435 330V363" stroke="#8c8c8c" stroke-width="2"/><path d="M2435 365V400" stroke="#7a7a7a" stroke-width="2"/><text x="2442" y="350" font-size="25" letter-spacing="1.300" fill="#d6d6d6" stroke="#d6d6d6" stroke-width=".3">113</text><path d="M2465 366V400" stroke="#6b6b6b" stroke-width="1.500"/><path d="M2495 366V400" stroke="#6b6b6b" stroke-width="1.500"/><path d="M2523 366V400" stroke="#6b6b6b" stroke-width="1.500"/><path d="M2553 366V400" stroke="#6b6b6b" stroke-width="1.500"/><path d="M2583 366V400" stroke="#6b6b6b" stroke-width="1.500"/><path d="M2611 366V400" stroke="#6b6b6b" stroke-width="1.500"/><path d="M2641 366V400" stroke="#6b6b6b" stroke-width="1.500"/><path d="M2671 330V363" stroke="#8c8c8c" stroke-width="2"/><path d="M2671 365V400" stroke="#7a7a7a" stroke-width="2"/><text x="2678" y="350" font-size="25" letter-spacing="1.300" fill="#d6d6d6" stroke="#d6d6d6" stroke-width=".3">129</text><path d="M2699 366V400" stroke="#6b6b6b" stroke-width="1.500"/><path d="M2729 366V400" stroke="#6b6b6b" stroke-width="1.500"/><path d="M2759 366V400" stroke="#6b6b6b" stroke-width="1.500"/><path d="M2787 366V400" stroke="#6b6b6b" stroke-width="1.500"/><path d="M2817 366V400" stroke="#6b6b6b" stroke-width="1.500"/><path d="M2847 366V400" stroke="#6b6b6b" stroke-width="1.500"/>
<path d="M793 400V375l23-10.500" fill="none" stroke="#1c1c1c" stroke-width="2"/><text x="810" y="389" font-size="21" fill="#dcdcdc" stroke="#dcdcdc" stroke-width=".4">A</text><path d="M1145 400V375l23-10.500" fill="none" stroke="#1c1c1c" stroke-width="2"/><text x="1162" y="389" font-size="21" fill="#dcdcdc" stroke="#dcdcdc" stroke-width=".4">B</text><path d="M1497 400V375l23-10.500" fill="none" stroke="#1c1c1c" stroke-width="2"/><text x="1514" y="389" font-size="21" fill="#dcdcdc" stroke="#dcdcdc" stroke-width=".4">C</text><path d="M1731 400V375l23-10.500" fill="none" stroke="#1c1c1c" stroke-width="2"/><text x="1748" y="389" font-size="21" fill="#dcdcdc" stroke="#dcdcdc" stroke-width=".4">D</text><path d="M1967 400V375l23-10.500" fill="none" stroke="#1c1c1c" stroke-width="2"/><text x="1984" y="389" font-size="21" fill="#dcdcdc" stroke="#dcdcdc" stroke-width=".4">E</text><path d="M2319 400V375l23-10.500" fill="none" stroke="#1c1c1c" stroke-width="2"/><text x="2336" y="389" font-size="21" fill="#dcdcdc" stroke="#dcdcdc" stroke-width=".4">F</text><path d="M2553 400V375l23-10.500" fill="none" stroke="#1c1c1c" stroke-width="2"/><text x="2570" y="389" font-size="21" fill="#dcdcdc" stroke="#dcdcdc" stroke-width=".4">G</text><path d="M760 399.500H2860" stroke="#161616" stroke-width="2"/>
<path d="M761 328.500l14.500 13-14.500 13z" fill="#5a5a5a"/><path d="M779 326V364" stroke="#8a8a8a" stroke-width="1.200" stroke-dasharray="2 2"/>
<path d="M799.6 473L904.5 473Q911 473 911 480.5Q911 473 917.5 473L1020.5 473Q1027 473 1027 480.5Q1027 473 1033.5 473L1138.5 473Q1145 473 1145 480.5Q1145 473 1151.5 473L1212.4 473Q1218.9 473 1218.9 479.5L1218.9 534.5Q1218.9 541 1212.4 541L1151.5 541Q1145 541 1145 533.5Q1145 541 1138.5 541L1033.5 541Q1027 541 1027 533.5Q1027 541 1020.5 541L917.5 541Q911 541 911 533.5Q911 541 904.5 541L799.6 541Q793.1 541 793.1 534.5L793.1 479.5Q793.1 473 799.6 473ZM1235.3 473L1244.7 473Q1246.9 473 1246.9 475.2L1246.9 538.8Q1246.9 541 1244.7 541L1235.3 541Q1233.1 541 1233.1 538.8L1233.1 475.2Q1233.1 473 1235.3 473ZM2251.6 473L2312.4 473Q2318.9 473 2318.9 479.5L2318.9 534.5Q2318.9 541 2312.4 541L2251.6 541Q2245.1 541 2245.1 534.5L2245.1 479.5Q2245.1 473 2251.6 473ZM2325.6 473L2428.5 473Q2435 473 2435 480.5Q2435 473 2441.5 473L2546.5 473Q2553 473 2553 480.5Q2553 473 2559.5 473L2664.5 473Q2671 473 2671 480.5Q2671 473 2677.5 473L2780.4 473Q2786.9 473 2786.9 479.5L2786.9 534.5Q2786.9 541 2780.4 541L2677.5 541Q2671 541 2671 533.5Q2671 541 2664.5 541L2559.5 541Q2553 541 2553 533.5Q2553 541 2546.5 541L2441.5 541Q2435 541 2435 533.5Q2435 541 2428.5 541L2325.6 541Q2319.1 541 2319.1 534.5L2319.1 479.5Q2319.1 473 2325.6 473Z" fill="#7a5a2b" stroke="#000" stroke-width="2"/>
<path d="M799.6 545L816.5 545Q823 545 823 552.5Q823 545 829.5 545L844.5 545Q851 545 851 552.5Q851 545 857.5 545L874.5 545Q881 545 881 552.5Q881 545 887.5 545L904.5 545Q911 545 911 552.5Q911 545 917.5 545L932.5 545Q939 545 939 552.5Q939 545 945.5 545L962.5 545Q969 545 969 552.5Q969 545 975.5 545L992.5 545Q999 545 999 552.5Q999 545 1005.5 545L1020.5 545Q1027 545 1027 552.5Q1027 545 1033.5 545L1050.5 545Q1057 545 1057 552.5Q1057 545 1063.5 545L1080.5 545Q1087 545 1087 552.5Q1087 545 1093.5 545L1108.5 545Q1115 545 1115 552.5Q1115 545 1121.5 545L1138.5 545Q1145 545 1145 552.5Q1145 545 1151.5 545L1168.5 545Q1175 545 1175 552.5Q1175 545 1181.5 545L1196.5 545Q1203 545 1203 552.5Q1203 545 1209.5 545L1226.5 545Q1233 545 1233 552.5Q1233 545 1239.5 545L1256.4 545Q1262.9 545 1262.9 551.5L1262.9 606.5Q1262.9 613 1256.4 613L1239.5 613Q1233 613 1233 605.5Q1233 613 1226.5 613L1209.5 613Q1203 613 1203 605.5Q1203 613 1196.5 613L1181.5 613Q1175 613 1175 605.5Q1175 613 1168.5 613L1151.5 613Q1145 613 1145 605.5Q1145 613 1138.5 613L1121.5 613Q1115 613 1115 605.5Q1115 613 1108.5 613L1093.5 613Q1087 613 1087 605.5Q1087 613 1080.5 613L1063.5 613Q1057 613 1057 605.5Q1057 613 1050.5 613L1033.5 613Q1027 613 1027 605.5Q1027 613 1020.5 613L1005.5 613Q999 613 999 605.5Q999 613 992.5 613L975.5 613Q969 613 969 605.5Q969 613 962.5 613L945.5 613Q939 613 939 605.5Q939 613 932.5 613L917.5 613Q911 613 911 605.5Q911 613 904.5 613L887.5 613Q881 613 881 605.5Q881 613 874.5 613L857.5 613Q851 613 851 605.5Q851 613 844.5 613L829.5 613Q823 613 823 605.5Q823 613 816.5 613L799.6 613Q793.1 613 793.1 606.5L793.1 551.5Q793.1 545 799.6 545ZM1269.6 545L1284.5 545Q1291 545 1291 552.5Q1291 545 1297.5 545L1314.5 545Q1321 545 1321 552.5Q1321 545 1327.5 545L1344.5 545Q1351 545 1351 552.5Q1351 545 1357.5 545L1372.5 545Q1379 545 1379 552.5Q1379 545 1385.5 545L1402.5 545Q1409 545 1409 552.5Q1409 545 1415.5 545L1432.5 545Q1439 545 1439 552.5Q1439 545 1445.5 545L1460.4 545Q1466.9 545 1466.9 551.5L1466.9 606.5Q1466.9 613 1460.4 613L1445.5 613Q1439 613 1439 605.5Q1439 613 1432.5 613L1415.5 613Q1409 613 1409 605.5Q1409 613 1402.5 613L1385.5 613Q1379 613 1379 605.5Q1379 613 1372.5 613L1357.5 613Q1351 613 1351 605.5Q1351 613 1344.5 613L1327.5 613Q1321 613 1321 605.5Q1321 613 1314.5 613L1297.5 613Q1291 613 1291 605.5Q1291 613 1284.5 613L1269.6 613Q1263.1 613 1263.1 606.5L1263.1 551.5Q1263.1 545 1269.6 545ZM1473.6 545L1490.4 545Q1496.9 545 1496.9 551.5L1496.9 606.5Q1496.9 613 1490.4 613L1473.6 613Q1467.1 613 1467.1 606.5L1467.1 551.5Q1467.1 545 1473.6 545ZM1503.6 545L1520.5 545Q1527 545 1527 552.5Q1527 545 1533.5 545L1548.5 545Q1555 545 1555 552.5Q1555 545 1561.5 545L1578.4 545Q1584.9 545 1584.9 551.5L1584.9 606.5Q1584.9 613 1578.4 613L1561.5 613Q1555 613 1555 605.5Q1555 613 1548.5 613L1533.5 613Q1527 613 1527 605.5Q1527 613 1520.5 613L1503.6 613Q1497.1 613 1497.1 606.5L1497.1 551.5Q1497.1 545 1503.6 545ZM1591.6 545L1608.5 545Q1615 545 1615 552.5Q1615 545 1621.5 545L1636.5 545Q1643 545 1643 552.5Q1643 545 1649.5 545L1666.5 545Q1673 545 1673 552.5Q1673 545 1679.5 545L1696.4 545Q1702.9 545 1702.9 551.5L1702.9 606.5Q1702.9 613 1696.4 613L1679.5 613Q1673 613 1673 605.5Q1673 613 1666.5 613L1649.5 613Q1643 613 1643 605.5Q1643 613 1636.5 613L1621.5 613Q1615 613 1615 605.5Q1615 613 1608.5 613L1591.6 613Q1585.1 613 1585.1 606.5L1585.1 551.5Q1585.1 545 1591.6 545ZM1709.6 545L1724.5 545Q1731 545 1731 552.5Q1731 545 1737.5 545L1754.5 545Q1761 545 1761 552.5Q1761 545 1767.5 545L1784.4 545Q1790.9 545 1790.9 551.5L1790.9 606.5Q1790.9 613 1784.4 613L1767.5 613Q1761 613 1761 605.5Q1761 613 1754.5 613L1737.5 613Q1731 613 1731 605.5Q1731 613 1724.5 613L1709.6 613Q1703.1 613 1703.1 606.5L1703.1 551.5Q1703.1 545 1709.6 545ZM1797.6 545L1812.5 545Q1819 545 1819 552.5Q1819 545 1825.5 545L1842.5 545Q1849 545 1849 552.5Q1849 545 1855.5 545L1872.5 545Q1879 545 1879 552.5Q1879 545 1885.5 545L1900.5 545Q1907 545 1907 552.5Q1907 545 1913.5 545L1930.5 545Q1937 545 1937 552.5Q1937 545 1943.5 545L1960.4 545Q1966.9 545 1966.9 551.5L1966.9 606.5Q1966.9 613 1960.4 613L1943.5 613Q1937 613 1937 605.5Q1937 613 1930.5 613L1913.5 613Q1907 613 1907 605.5Q1907 613 1900.5 613L1885.5 613Q1879 613 1879 605.5Q1879 613 1872.5 613L1855.5 613Q1849 613 1849 605.5Q1849 613 1842.5 613L1825.5 613Q1819 613 1819 605.5Q1819 613 1812.5 613L1797.6 613Q1791.1 613 1791.1 606.5L1791.1 551.5Q1791.1 545 1797.6 545ZM1973.6 545L1988.5 545Q1995 545 1995 552.5Q1995 545 2001.5 545L2018.5 545Q2025 545 2025 552.5Q2025 545 2031.5 545L2048.5 545Q2055 545 2055 552.5Q2055 545 2061.5 545L2076.5 545Q2083 545 2083 552.5Q2083 545 2089.5 545L2106.5 545Q2113 545 2113 552.5Q2113 545 2119.5 545L2136.4 545Q2142.9 545 2142.9 551.5L2142.9 606.5Q2142.9 613 2136.4 613L2119.5 613Q2113 613 2113 605.5Q2113 613 2106.5 613L2089.5 613Q2083 613 2083 605.5Q2083 613 2076.5 613L2061.5 613Q2055 613 2055 605.5Q2055 613 2048.5 613L2031.5 613Q2025 613 2025 605.5Q2025 613 2018.5 613L2001.5 613Q1995 613 1995 605.5Q1995 613 1988.5 613L1973.6 613Q1967.1 613 1967.1 606.5L1967.1 551.5Q1967.1 545 1973.6 545ZM2149.6 545L2164.5 545Q2171 545 2171 552.5Q2171 545 2177.5 545L2194.5 545Q2201 545 2201 552.5Q2201 545 2207.5 545L2224.5 545Q2231 545 2231 552.5Q2231 545 2237.5 545L2252.5 545Q2259 545 2259 552.5Q2259 545 2265.5 545L2282.5 545Q2289 545 2289 552.5Q2289 545 2295.5 545L2312.5 545Q2319 545 2319 552.5Q2319 545 2325.5 545L2340.5 545Q2347 545 2347 552.5Q2347 545 2353.5 545L2370.4 545Q2376.9 545 2376.9 551.5L2376.9 606.5Q2376.9 613 2370.4 613L2353.5 613Q2347 613 2347 605.5Q2347 613 2340.5 613L2325.5 613Q2319 613 2319 605.5Q2319 613 2312.5 613L2295.5 613Q2289 613 2289 605.5Q2289 613 2282.5 613L2265.5 613Q2259 613 2259 605.5Q2259 613 2252.5 613L2237.5 613Q2231 613 2231 605.5Q2231 613 2224.5 613L2207.5 613Q2201 613 2201 605.5Q2201 613 2194.5 613L2177.5 613Q2171 613 2171 605.5Q2171 613 2164.5 613L2149.6 613Q2143.1 613 2143.1 606.5L2143.1 551.5Q2143.1 545 2149.6 545ZM2383.6 545L2400.4 545Q2406.9 545 2406.9 551.5L2406.9 606.5Q2406.9 613 2400.4 613L2383.6 613Q2377.1 613 2377.1 606.5L2377.1 551.5Q2377.1 545 2383.6 545ZM2413.6 545L2428.5 545Q2435 545 2435 552.5Q2435 545 2441.5 545L2458.5 545Q2465 545 2465 552.5Q2465 545 2471.5 545L2488.5 545Q2495 545 2495 552.5Q2495 545 2501.5 545L2516.5 545Q2523 545 2523 552.5Q2523 545 2529.5 545L2546.5 545Q2553 545 2553 552.5Q2553 545 2559.5 545L2576.5 545Q2583 545 2583 552.5Q2583 545 2589.5 545L2604.4 545Q2610.9 545 2610.9 551.5L2610.9 606.5Q2610.9 613 2604.4 613L2589.5 613Q2583 613 2583 605.5Q2583 613 2576.5 613L2559.5 613Q2553 613 2553 605.5Q2553 613 2546.5 613L2529.5 613Q2523 613 2523 605.5Q2523 613 2516.5 613L2501.5 613Q2495 613 2495 605.5Q2495 613 2488.5 613L2471.5 613Q2465 613 2465 605.5Q2465 613 2458.5 613L2441.5 613Q2435 613 2435 605.5Q2435 613 2428.5 613L2413.6 613Q2407.1 613 2407.1 606.5L2407.1 551.5Q2407.1 545 2413.6 545ZM2617.6 545L2634.5 545Q2641 545 2641 552.5Q2641 545 2647.5 545L2664.5 545Q2671 545 2671 552.5Q2671 545 2677.5 545L2692.5 545Q2699 545 2699 552.5Q2699 545 2705.5 545L2722.5 545Q2729 545 2729 552.5Q2729 545 2735.5 545L2752.5 545Q2759 545 2759 552.5Q2759 545 2765.5 545L2780.4 545Q2786.9 545 2786.9 551.5L2786.9 606.5Q2786.9 613 2780.4 613L2765.5 613Q2759 613 2759 605.5Q2759 613 2752.5 613L2735.5 613Q2729 613 2729 605.5Q2729 613 2722.5 613L2705.5 613Q2699 613 2699 605.5Q2699 613 2692.5 613L2677.5 613Q2671 613 2671 605.5Q2671 613 2664.5 613L2647.5 613Q2641 613 2641 605.5Q2641 613 2634.5 613L2617.6 613Q2611.1 613 2611.1 606.5L2611.1 551.5Q2611.1 545 2617.6 545Z" fill="#63257b" stroke="#000" stroke-width="2"/>
<path d="M867.9 617L2038.1 617Q2038.9 617 2038.9 617.8L2038.9 684.2Q2038.9 685 2038.1 685L867.9 685Q867.1 685 867.1 684.2L867.1 617.8Q867.1 617 867.9 617ZM2201.9 617L2786.1 617Q2786.9 617 2786.9 617.8L2786.9 684.2Q2786.9 685 2786.1 685L2201.9 685Q2201.1 685 2201.1 684.2L2201.1 617.8Q2201.1 617 2201.9 617Z" fill="#7c6c2e" stroke="#000" stroke-width="2"/>
<path d="M867.9 689L2786.1 689Q2786.9 689 2786.9 689.8L2786.9 756.2Q2786.9 757 2786.1 757L867.9 757Q867.1 757 867.1 756.2L867.1 689.8Q867.1 689 867.9 689Z" fill="#7e8033" stroke="#000" stroke-width="2"/>
<path d="M867.9 761L2786.1 761Q2786.9 761 2786.9 761.8L2786.9 828.2Q2786.9 829 2786.1 829L867.9 829Q867.1 829 867.1 828.2L867.1 761.8Q867.1 761 867.9 761Z" fill="#6d7f30" stroke="#000" stroke-width="2"/>
<path d="M971.3 833L980.7 833Q982.9 833 982.9 835.2L982.9 898.8Q982.9 901 980.7 901L971.3 901Q969.1 901 969.1 898.8L969.1 835.2Q969.1 833 971.3 833ZM1033.6 833L1080.5 833Q1087 833 1087 840.5Q1087 833 1093.5 833L1138.5 833Q1145 833 1145 840.5Q1145 833 1151.5 833L1196.5 833Q1203 833 1203 840.5Q1203 833 1209.5 833L1256.5 833Q1263 833 1263 840.5Q1263 833 1269.5 833L1314.5 833Q1321 833 1321 840.5Q1321 833 1327.5 833L1372.5 833Q1379 833 1379 840.5Q1379 833 1385.5 833L1432.5 833Q1439 833 1439 840.5Q1439 833 1445.5 833L1490.5 833Q1497 833 1497 840.5Q1497 833 1503.5 833L1548.5 833Q1555 833 1555 840.5Q1555 833 1561.5 833L1608.5 833Q1615 833 1615 840.5Q1615 833 1621.5 833L1666.5 833Q1673 833 1673 840.5Q1673 833 1679.5 833L1724.5 833Q1731 833 1731 840.5Q1731 833 1737.5 833L1784.4 833Q1790.9 833 1790.9 839.5L1790.9 894.5Q1790.9 901 1784.4 901L1737.5 901Q1731 901 1731 893.5Q1731 901 1724.5 901L1679.5 901Q1673 901 1673 893.5Q1673 901 1666.5 901L1621.5 901Q1615 901 1615 893.5Q1615 901 1608.5 901L1561.5 901Q1555 901 1555 893.5Q1555 901 1548.5 901L1503.5 901Q1497 901 1497 893.5Q1497 901 1490.5 901L1445.5 901Q1439 901 1439 893.5Q1439 901 1432.5 901L1385.5 901Q1379 901 1379 893.5Q1379 901 1372.5 901L1327.5 901Q1321 901 1321 893.5Q1321 901 1314.5 901L1269.5 901Q1263 901 1263 893.5Q1263 901 1256.5 901L1209.5 901Q1203 901 1203 893.5Q1203 901 1196.5 901L1151.5 901Q1145 901 1145 893.5Q1145 901 1138.5 901L1093.5 901Q1087 901 1087 893.5Q1087 901 1080.5 901L1033.6 901Q1027.1 901 1027.1 894.5L1027.1 839.5Q1027.1 833 1033.6 833ZM2031.6 833L2076.5 833Q2083 833 2083 840.5Q2083 833 2089.5 833L2136.5 833Q2143 833 2143 840.5Q2143 833 2149.5 833L2194.5 833Q2201 833 2201 840.5Q2201 833 2207.5 833L2252.5 833Q2259 833 2259 840.5Q2259 833 2265.5 833L2312.5 833Q2319 833 2319 840.5Q2319 833 2325.5 833L2370.5 833Q2377 833 2377 840.5Q2377 833 2383.5 833L2428.5 833Q2435 833 2435 840.5Q2435 833 2441.5 833L2488.5 833Q2495 833 2495 840.5Q2495 833 2501.5 833L2546.5 833Q2553 833 2553 840.5Q2553 833 2559.5 833L2604.5 833Q2611 833 2611 840.5Q2611 833 2617.5 833L2664.5 833Q2671 833 2671 840.5Q2671 833 2677.5 833L2722.5 833Q2729 833 2729 840.5Q2729 833 2735.5 833L2780.4 833Q2786.9 833 2786.9 839.5L2786.9 894.5Q2786.9 901 2780.4 901L2735.5 901Q2729 901 2729 893.5Q2729 901 2722.5 901L2677.5 901Q2671 901 2671 893.5Q2671 901 2664.5 901L2617.5 901Q2611 901 2611 893.5Q2611 901 2604.5 901L2559.5 901Q2553 901 2553 893.5Q2553 901 2546.5 901L2501.5 901Q2495 901 2495 893.5Q2495 901 2488.5 901L2441.5 901Q2435 901 2435 893.5Q2435 901 2428.5 901L2383.5 901Q2377 901 2377 893.5Q2377 901 2370.5 901L2325.5 901Q2319 901 2319 893.5Q2319 901 2312.5 901L2265.5 901Q2259 901 2259 893.5Q2259 901 2252.5 901L2207.5 901Q2201 901 2201 893.5Q2201 901 2194.5 901L2149.5 901Q2143 901 2143 893.5Q2143 901 2136.5 901L2089.5 901Q2083 901 2083 893.5Q2083 901 2076.5 901L2031.6 901Q2025.1 901 2025.1 894.5L2025.1 839.5Q2025.1 833 2031.6 833Z" fill="#637e2f" stroke="#000" stroke-width="2"/>
<path d="M1027.9 905L1056.1 905Q1056.9 905 1056.9 905.8L1056.9 972.2Q1056.9 973 1056.1 973L1027.9 973Q1027.1 973 1027.1 972.2L1027.1 905.8Q1027.1 905 1027.9 905ZM1379.9 905L1392.8 905Q1395 905 1395 907.6Q1395 905 1397.2 905L1406.8 905Q1409 905 1409 907.6Q1409 905 1411.2 905L1420.8 905Q1423 905 1423 907.6Q1423 905 1425.2 905L1436.8 905Q1439 905 1439 907.6Q1439 905 1441.2 905L1450.8 905Q1453 905 1453 907.6Q1453 905 1455.2 905L1466.1 905Q1466.9 905 1466.9 905.8L1466.9 972.2Q1466.9 973 1466.1 973L1455.2 973Q1453 973 1453 970.4Q1453 973 1450.8 973L1441.2 973Q1439 973 1439 970.4Q1439 973 1436.8 973L1425.2 973Q1423 973 1423 970.4Q1423 973 1420.8 973L1411.2 973Q1409 973 1409 970.4Q1409 973 1406.8 973L1397.2 973Q1395 973 1395 970.4Q1395 973 1392.8 973L1379.9 973Q1379.1 973 1379.1 972.2L1379.1 905.8Q1379.1 905 1379.9 905ZM1497.9 905L1508.8 905Q1511 905 1511 907.6Q1511 905 1513.2 905L1524.8 905Q1527 905 1527 907.6Q1527 905 1529.2 905L1538.8 905Q1541 905 1541 907.6Q1541 905 1543.2 905L1552.8 905Q1555 905 1555 907.6Q1555 905 1557.2 905L1568.8 905Q1571 905 1571 907.6Q1571 905 1573.2 905L1584.1 905Q1584.9 905 1584.9 905.8L1584.9 972.2Q1584.9 973 1584.1 973L1573.2 973Q1571 973 1571 970.4Q1571 973 1568.8 973L1557.2 973Q1555 973 1555 970.4Q1555 973 1552.8 973L1543.2 973Q1541 973 1541 970.4Q1541 973 1538.8 973L1529.2 973Q1527 973 1527 970.4Q1527 973 1524.8 973L1513.2 973Q1511 973 1511 970.4Q1511 973 1508.8 973L1497.9 973Q1497.1 973 1497.1 972.2L1497.1 905.8Q1497.1 905 1497.9 905ZM1895.3 905L1904.7 905Q1906.9 905 1906.9 907.2L1906.9 970.8Q1906.9 973 1904.7 973L1895.3 973Q1893.1 973 1893.1 970.8L1893.1 907.2Q1893.1 905 1895.3 905ZM1925.3 905L1934.7 905Q1936.9 905 1936.9 907.2L1936.9 970.8Q1936.9 973 1934.7 973L1925.3 973Q1923.1 973 1923.1 970.8L1923.1 907.2Q1923.1 905 1925.3 905ZM1967.9 905L2024.1 905Q2024.9 905 2024.9 905.8L2024.9 972.2Q2024.9 973 2024.1 973L1967.9 973Q1967.1 973 1967.1 972.2L1967.1 905.8Q1967.1 905 1967.9 905ZM2409.3 905L2418.7 905Q2420.9 905 2420.9 907.2L2420.9 970.8Q2420.9 973 2418.7 973L2409.3 973Q2407.1 973 2407.1 970.8L2407.1 907.2Q2407.1 905 2409.3 905ZM2423.3 905L2432.7 905Q2434.9 905 2434.9 907.2L2434.9 970.8Q2434.9 973 2432.7 973L2423.3 973Q2421.1 973 2421.1 970.8L2421.1 907.2Q2421.1 905 2423.3 905ZM2435.9 905L2448.8 905Q2451 905 2451 907.6Q2451 905 2453.2 905L2462.8 905Q2465 905 2465 907.6Q2465 905 2467.2 905L2476.8 905Q2479 905 2479 907.6Q2479 905 2481.2 905L2492.8 905Q2495 905 2495 907.6Q2495 905 2497.2 905L2506.8 905Q2509 905 2509 907.6Q2509 905 2511.2 905L2520.8 905Q2523 905 2523 907.6Q2523 905 2525.2 905L2536.8 905Q2539 905 2539 907.6Q2539 905 2541.2 905L2550.8 905Q2553 905 2553 907.6Q2553 905 2555.2 905L2564.8 905Q2567 905 2567 907.6Q2567 905 2569.2 905L2582.1 905Q2582.9 905 2582.9 905.8L2582.9 972.2Q2582.9 973 2582.1 973L2569.2 973Q2567 973 2567 970.4Q2567 973 2564.8 973L2555.2 973Q2553 973 2553 970.4Q2553 973 2550.8 973L2541.2 973Q2539 973 2539 970.4Q2539 973 2536.8 973L2525.2 973Q2523 973 2523 970.4Q2523 973 2520.8 973L2511.2 973Q2509 973 2509 970.4Q2509 973 2506.8 973L2497.2 973Q2495 973 2495 970.4Q2495 973 2492.8 973L2481.2 973Q2479 973 2479 970.4Q2479 973 2476.8 973L2467.2 973Q2465 973 2465 970.4Q2465 973 2462.8 973L2453.2 973Q2451 973 2451 970.4Q2451 973 2448.8 973L2435.9 973Q2435.1 973 2435.1 972.2L2435.1 905.8Q2435.1 905 2435.9 905ZM2611.9 905L2624.8 905Q2627 905 2627 907.6Q2627 905 2629.2 905L2638.8 905Q2641 905 2641 907.6Q2641 905 2643.2 905L2652.8 905Q2655 905 2655 907.6Q2655 905 2657.2 905L2668.8 905Q2671 905 2671 907.6Q2671 905 2673.2 905L2682.8 905Q2685 905 2685 907.6Q2685 905 2687.2 905L2696.8 905Q2699 905 2699 907.6Q2699 905 2701.2 905L2712.8 905Q2715 905 2715 907.6Q2715 905 2717.2 905L2726.8 905Q2729 905 2729 907.6Q2729 905 2731.2 905L2740.8 905Q2743 905 2743 907.6Q2743 905 2745.2 905L2756.8 905Q2759 905 2759 907.6Q2759 905 2761.2 905L2770.8 905Q2773 905 2773 907.6Q2773 905 2775.2 905L2786.1 905Q2786.9 905 2786.9 905.8L2786.9 972.2Q2786.9 973 2786.1 973L2775.2 973Q2773 973 2773 970.4Q2773 973 2770.8 973L2761.2 973Q2759 973 2759 970.4Q2759 973 2756.8 973L2745.2 973Q2743 973 2743 970.4Q2743 973 2740.8 973L2731.2 973Q2729 973 2729 970.4Q2729 973 2726.8 973L2717.2 973Q2715 973 2715 970.4Q2715 973 2712.8 973L2701.2 973Q2699 973 2699 970.4Q2699 973 2696.8 973L2687.2 973Q2685 973 2685 970.4Q2685 973 2682.8 973L2673.2 973Q2671 973 2671 970.4Q2671 973 2668.8 973L2657.2 973Q2655 973 2655 970.4Q2655 973 2652.8 973L2643.2 973Q2641 973 2641 970.4Q2641 973 2638.8 973L2629.2 973Q2627 973 2627 970.4Q2627 973 2624.8 973L2611.9 973Q2611.1 973 2611.1 972.2L2611.1 905.8Q2611.1 905 2611.9 905Z" fill="#55822f" stroke="#000" stroke-width="2"/>
<path d="M1269.6 977L1372.5 977Q1379 977 1379 984.5Q1379 977 1385.5 977L1490.5 977Q1497 977 1497 984.5Q1497 977 1503.5 977L1608.5 977Q1615 977 1615 984.5Q1615 977 1621.5 977L1724.5 977Q1731 977 1731 984.5Q1731 977 1737.5 977L1842.4 977Q1848.9 977 1848.9 983.5L1848.9 1038.5Q1848.9 1045 1842.4 1045L1737.5 1045Q1731 1045 1731 1037.5Q1731 1045 1724.5 1045L1621.5 1045Q1615 1045 1615 1037.5Q1615 1045 1608.5 1045L1503.5 1045Q1497 1045 1497 1037.5Q1497 1045 1490.5 1045L1385.5 1045Q1379 1045 1379 1037.5Q1379 1045 1372.5 1045L1269.6 1045Q1263.1 1045 1263.1 1038.5L1263.1 983.5Q1263.1 977 1269.6 977ZM1973.6 977L2076.4 977Q2082.9 977 2082.9 983.5L2082.9 1038.5Q2082.9 1045 2076.4 1045L1973.6 1045Q1967.1 1045 1967.1 1038.5L1967.1 983.5Q1967.1 977 1973.6 977ZM2617.6 977L2664.4 977Q2670.9 977 2670.9 983.5L2670.9 1038.5Q2670.9 1045 2664.4 1045L2617.6 1045Q2611.1 1045 2611.1 1038.5L2611.1 983.5Q2611.1 977 2617.6 977ZM2677.6 977L2780.4 977Q2786.9 977 2786.9 983.5L2786.9 1038.5Q2786.9 1045 2780.4 1045L2677.6 1045Q2671.1 1045 2671.1 1038.5L2671.1 983.5Q2671.1 977 2677.6 977Z" fill="#3d803b" stroke="#000" stroke-width="2"/>
<path d="M1265.3 1049L1274.7 1049Q1276.9 1049 1276.9 1051.2L1276.9 1114.8Q1276.9 1117 1274.7 1117L1265.3 1117Q1263.1 1117 1263.1 1114.8L1263.1 1051.2Q1263.1 1049 1265.3 1049ZM1293.3 1049L1304.7 1049Q1306.9 1049 1306.9 1051.2L1306.9 1114.8Q1306.9 1117 1304.7 1117L1293.3 1117Q1291.1 1117 1291.1 1114.8L1291.1 1051.2Q1291.1 1049 1293.3 1049ZM1323.3 1049L1332.7 1049Q1334.9 1049 1334.9 1051.2L1334.9 1114.8Q1334.9 1117 1332.7 1117L1323.3 1117Q1321.1 1117 1321.1 1114.8L1321.1 1051.2Q1321.1 1049 1323.3 1049ZM1353.3 1049L1362.7 1049Q1364.9 1049 1364.9 1051.2L1364.9 1114.8Q1364.9 1117 1362.7 1117L1353.3 1117Q1351.1 1117 1351.1 1114.8L1351.1 1051.2Q1351.1 1049 1353.3 1049ZM1381.3 1049L1392.7 1049Q1394.9 1049 1394.9 1051.2L1394.9 1114.8Q1394.9 1117 1392.7 1117L1381.3 1117Q1379.1 1117 1379.1 1114.8L1379.1 1051.2Q1379.1 1049 1381.3 1049ZM1411.3 1049L1420.7 1049Q1422.9 1049 1422.9 1051.2L1422.9 1114.8Q1422.9 1117 1420.7 1117L1411.3 1117Q1409.1 1117 1409.1 1114.8L1409.1 1051.2Q1409.1 1049 1411.3 1049ZM1441.3 1049L1450.7 1049Q1452.9 1049 1452.9 1051.2L1452.9 1114.8Q1452.9 1117 1450.7 1117L1441.3 1117Q1439.1 1117 1439.1 1114.8L1439.1 1051.2Q1439.1 1049 1441.3 1049ZM1469.3 1049L1480.7 1049Q1482.9 1049 1482.9 1051.2L1482.9 1114.8Q1482.9 1117 1480.7 1117L1469.3 1117Q1467.1 1117 1467.1 1114.8L1467.1 1051.2Q1467.1 1049 1469.3 1049ZM1969.3 1049L1978.7 1049Q1980.9 1049 1980.9 1051.2L1980.9 1114.8Q1980.9 1117 1978.7 1117L1969.3 1117Q1967.1 1117 1967.1 1114.8L1967.1 1051.2Q1967.1 1049 1969.3 1049ZM1997.3 1049L2008.7 1049Q2010.9 1049 2010.9 1051.2L2010.9 1114.8Q2010.9 1117 2008.7 1117L1997.3 1117Q1995.1 1117 1995.1 1114.8L1995.1 1051.2Q1995.1 1049 1997.3 1049ZM2027.3 1049L2036.7 1049Q2038.9 1049 2038.9 1051.2L2038.9 1114.8Q2038.9 1117 2036.7 1117L2027.3 1117Q2025.1 1117 2025.1 1114.8L2025.1 1051.2Q2025.1 1049 2027.3 1049ZM2613.3 1049L2624.7 1049Q2626.9 1049 2626.9 1051.2L2626.9 1114.8Q2626.9 1117 2624.7 1117L2613.3 1117Q2611.1 1117 2611.1 1114.8L2611.1 1051.2Q2611.1 1049 2613.3 1049ZM2643.3 1049L2652.7 1049Q2654.9 1049 2654.9 1051.2L2654.9 1114.8Q2654.9 1117 2652.7 1117L2643.3 1117Q2641.1 1117 2641.1 1114.8L2641.1 1051.2Q2641.1 1049 2643.3 1049ZM2673.3 1049L2682.7 1049Q2684.9 1049 2684.9 1051.2L2684.9 1114.8Q2684.9 1117 2682.7 1117L2673.3 1117Q2671.1 1117 2671.1 1114.8L2671.1 1051.2Q2671.1 1049 2673.3 1049ZM2701.3 1049L2712.7 1049Q2714.9 1049 2714.9 1051.2L2714.9 1114.8Q2714.9 1117 2712.7 1117L2701.3 1117Q2699.1 1117 2699.1 1114.8L2699.1 1051.2Q2699.1 1049 2701.3 1049Z" fill="#3f7f4e" stroke="#000" stroke-width="2"/>
<path d="M1511.9 1121L1598.1 1121Q1598.9 1121 1598.9 1121.8L1598.9 1188.2Q1598.9 1189 1598.1 1189L1511.9 1189Q1511.1 1189 1511.1 1188.2L1511.1 1121.8Q1511.1 1121 1511.9 1121ZM1615.9 1121L1966.1 1121Q1966.9 1121 1966.9 1121.8L1966.9 1188.2Q1966.9 1189 1966.1 1189L1615.9 1189Q1615.1 1189 1615.1 1188.2L1615.1 1121.8Q1615.1 1121 1615.9 1121ZM1995.9 1121L2008.8 1121Q2011 1121 2011 1123.6Q2011 1121 2013.2 1121L2022.8 1121Q2025 1121 2025 1123.6Q2025 1121 2027.2 1121L2036.8 1121Q2039 1121 2039 1123.6Q2039 1121 2041.2 1121L2054.1 1121Q2054.9 1121 2054.9 1121.8L2054.9 1188.2Q2054.9 1189 2054.1 1189L2041.2 1189Q2039 1189 2039 1186.4Q2039 1189 2036.8 1189L2027.2 1189Q2025 1189 2025 1186.4Q2025 1189 2022.8 1189L2013.2 1189Q2011 1189 2011 1186.4Q2011 1189 2008.8 1189L1995.9 1189Q1995.1 1189 1995.1 1188.2L1995.1 1121.8Q1995.1 1121 1995.9 1121ZM2289.9 1121L2552.1 1121Q2552.9 1121 2552.9 1121.8L2552.9 1188.2Q2552.9 1189 2552.1 1189L2289.9 1189Q2289.1 1189 2289.1 1188.2L2289.1 1121.8Q2289.1 1121 2289.9 1121ZM2729.9 1121L2786.1 1121Q2786.9 1121 2786.9 1121.8L2786.9 1188.2Q2786.9 1189 2786.1 1189L2729.9 1189Q2729.1 1189 2729.1 1188.2L2729.1 1121.8Q2729.1 1121 2729.9 1121Z" fill="#3e7d5b" stroke="#000" stroke-width="2"/>
<path d="M1585.9 1193L1596.8 1193Q1599 1193 1599 1195.6Q1599 1193 1601.2 1193L1612.8 1193Q1615 1193 1615 1195.6Q1615 1193 1617.2 1193L1626.8 1193Q1629 1193 1629 1195.6Q1629 1193 1631.2 1193L1640.8 1193Q1643 1193 1643 1195.6Q1643 1193 1645.2 1193L1656.8 1193Q1659 1193 1659 1195.6Q1659 1193 1661.2 1193L1670.8 1193Q1673 1193 1673 1195.6Q1673 1193 1675.2 1193L1684.8 1193Q1687 1193 1687 1195.6Q1687 1193 1689.2 1193L1702.1 1193Q1702.9 1193 1702.9 1193.8L1702.9 1260.2Q1702.9 1261 1702.1 1261L1689.2 1261Q1687 1261 1687 1258.4Q1687 1261 1684.8 1261L1675.2 1261Q1673 1261 1673 1258.4Q1673 1261 1670.8 1261L1661.2 1261Q1659 1261 1659 1258.4Q1659 1261 1656.8 1261L1645.2 1261Q1643 1261 1643 1258.4Q1643 1261 1640.8 1261L1631.2 1261Q1629 1261 1629 1258.4Q1629 1261 1626.8 1261L1617.2 1261Q1615 1261 1615 1258.4Q1615 1261 1612.8 1261L1601.2 1261Q1599 1261 1599 1258.4Q1599 1261 1596.8 1261L1585.9 1261Q1585.1 1261 1585.1 1260.2L1585.1 1193.8Q1585.1 1193 1585.9 1193Z" fill="#3d7c6e" stroke="#000" stroke-width="2"/>
<path d="M1585.9 1265L1596.8 1265Q1599 1265 1599 1267.6Q1599 1265 1601.2 1265L1612.8 1265Q1615 1265 1615 1267.6Q1615 1265 1617.2 1265L1626.8 1265Q1629 1265 1629 1267.6Q1629 1265 1631.2 1265L1640.8 1265Q1643 1265 1643 1267.6Q1643 1265 1645.2 1265L1656.8 1265Q1659 1265 1659 1267.6Q1659 1265 1661.2 1265L1670.8 1265Q1673 1265 1673 1267.6Q1673 1265 1675.2 1265L1684.8 1265Q1687 1265 1687 1267.6Q1687 1265 1689.2 1265L1702.1 1265Q1702.9 1265 1702.9 1265.8L1702.9 1332.2Q1702.9 1333 1702.1 1333L1689.2 1333Q1687 1333 1687 1330.4Q1687 1333 1684.8 1333L1675.2 1333Q1673 1333 1673 1330.4Q1673 1333 1670.8 1333L1661.2 1333Q1659 1333 1659 1330.4Q1659 1333 1656.8 1333L1645.2 1333Q1643 1333 1643 1330.4Q1643 1333 1640.8 1333L1631.2 1333Q1629 1333 1629 1330.4Q1629 1333 1626.8 1333L1617.2 1333Q1615 1333 1615 1330.4Q1615 1333 1612.8 1333L1601.2 1333Q1599 1333 1599 1330.4Q1599 1333 1596.8 1333L1585.9 1333Q1585.1 1333 1585.1 1332.2L1585.1 1265.8Q1585.1 1265 1585.9 1265Z" fill="#3f7d7c" stroke="#000" stroke-width="2"/>
<path d="M825.3 1337L834.7 1337Q836.9 1337 836.9 1339.2L836.9 1402.8Q836.9 1405 834.7 1405L825.3 1405Q823.1 1405 823.1 1402.8L823.1 1339.2Q823.1 1337 825.3 1337ZM853.3 1337L864.7 1337Q866.9 1337 866.9 1339.2L866.9 1402.8Q866.9 1405 864.7 1405L853.3 1405Q851.1 1405 851.1 1402.8L851.1 1339.2Q851.1 1337 853.3 1337ZM883.3 1337L892.7 1337Q894.9 1337 894.9 1339.2L894.9 1402.8Q894.9 1405 892.7 1405L883.3 1405Q881.1 1405 881.1 1402.8L881.1 1339.2Q881.1 1337 883.3 1337ZM913.3 1337L922.7 1337Q924.9 1337 924.9 1339.2L924.9 1402.8Q924.9 1405 922.7 1405L913.3 1405Q911.1 1405 911.1 1402.8L911.1 1339.2Q911.1 1337 913.3 1337ZM941.3 1337L952.7 1337Q954.9 1337 954.9 1339.2L954.9 1402.8Q954.9 1405 952.7 1405L941.3 1405Q939.1 1405 939.1 1402.8L939.1 1339.2Q939.1 1337 941.3 1337ZM971.3 1337L980.7 1337Q982.9 1337 982.9 1339.2L982.9 1402.8Q982.9 1405 980.7 1405L971.3 1405Q969.1 1405 969.1 1402.8L969.1 1339.2Q969.1 1337 971.3 1337ZM1001.3 1337L1010.7 1337Q1012.9 1337 1012.9 1339.2L1012.9 1402.8Q1012.9 1405 1010.7 1405L1001.3 1405Q999.1 1405 999.1 1402.8L999.1 1339.2Q999.1 1337 1001.3 1337ZM1705.3 1337L1714.7 1337Q1716.9 1337 1716.9 1339.2L1716.9 1402.8Q1716.9 1405 1714.7 1405L1705.3 1405Q1703.1 1405 1703.1 1402.8L1703.1 1339.2Q1703.1 1337 1705.3 1337ZM1733.3 1337L1744.7 1337Q1746.9 1337 1746.9 1339.2L1746.9 1402.8Q1746.9 1405 1744.7 1405L1733.3 1405Q1731.1 1405 1731.1 1402.8L1731.1 1339.2Q1731.1 1337 1733.3 1337ZM1763.3 1337L1772.7 1337Q1774.9 1337 1774.9 1339.2L1774.9 1402.8Q1774.9 1405 1772.7 1405L1763.3 1405Q1761.1 1405 1761.1 1402.8L1761.1 1339.2Q1761.1 1337 1763.3 1337ZM2145.3 1337L2154.7 1337Q2156.9 1337 2156.9 1339.2L2156.9 1402.8Q2156.9 1405 2154.7 1405L2145.3 1405Q2143.1 1405 2143.1 1402.8L2143.1 1339.2Q2143.1 1337 2145.3 1337ZM2173.3 1337L2184.7 1337Q2186.9 1337 2186.9 1339.2L2186.9 1402.8Q2186.9 1405 2184.7 1405L2173.3 1405Q2171.1 1405 2171.1 1402.8L2171.1 1339.2Q2171.1 1337 2173.3 1337ZM2203.3 1337L2212.7 1337Q2214.9 1337 2214.9 1339.2L2214.9 1402.8Q2214.9 1405 2212.7 1405L2203.3 1405Q2201.1 1405 2201.1 1402.8L2201.1 1339.2Q2201.1 1337 2203.3 1337ZM2233.3 1337L2242.7 1337Q2244.9 1337 2244.9 1339.2L2244.9 1402.8Q2244.9 1405 2242.7 1405L2233.3 1405Q2231.1 1405 2231.1 1402.8L2231.1 1339.2Q2231.1 1337 2233.3 1337ZM2261.3 1337L2272.7 1337Q2274.9 1337 2274.9 1339.2L2274.9 1402.8Q2274.9 1405 2272.7 1405L2261.3 1405Q2259.1 1405 2259.1 1402.8L2259.1 1339.2Q2259.1 1337 2261.3 1337ZM2291.3 1337L2300.7 1337Q2302.9 1337 2302.9 1339.2L2302.9 1402.8Q2302.9 1405 2300.7 1405L2291.3 1405Q2289.1 1405 2289.1 1402.8L2289.1 1339.2Q2289.1 1337 2291.3 1337ZM2321.3 1337L2330.7 1337Q2332.9 1337 2332.9 1339.2L2332.9 1402.8Q2332.9 1405 2330.7 1405L2321.3 1405Q2319.1 1405 2319.1 1402.8L2319.1 1339.2Q2319.1 1337 2321.3 1337ZM2349.3 1337L2360.7 1337Q2362.9 1337 2362.9 1339.2L2362.9 1402.8Q2362.9 1405 2360.7 1405L2349.3 1405Q2347.1 1405 2347.1 1402.8L2347.1 1339.2Q2347.1 1337 2349.3 1337ZM2365.3 1337L2374.7 1337Q2376.9 1337 2376.9 1339.2L2376.9 1402.8Q2376.9 1405 2374.7 1405L2365.3 1405Q2363.1 1405 2363.1 1402.8L2363.1 1339.2Q2363.1 1337 2365.3 1337ZM2585.3 1337L2594.7 1337Q2596.9 1337 2596.9 1339.2L2596.9 1402.8Q2596.9 1405 2594.7 1405L2585.3 1405Q2583.1 1405 2583.1 1402.8L2583.1 1339.2Q2583.1 1337 2585.3 1337Z" fill="#36697e" stroke="#000" stroke-width="2"/>
<path d="M1837.3 1409L1846.7 1409Q1848.9 1409 1848.9 1411.2L1848.9 1474.8Q1848.9 1477 1846.7 1477L1837.3 1477Q1835.1 1477 1835.1 1474.8L1835.1 1411.2Q1835.1 1409 1837.3 1409Z" fill="#38607f" stroke="#000" stroke-width="2"/>
<path d="M2509.9 1481L2582.1 1481Q2582.9 1481 2582.9 1481.8L2582.9 1548.2Q2582.9 1549 2582.1 1549L2509.9 1549Q2509.1 1549 2509.1 1548.2L2509.1 1481.8Q2509.1 1481 2509.9 1481Z" fill="#3b5680" stroke="#000" stroke-width="2"/>
<g font-size="22.500" letter-spacing=".45" stroke-width=".45"><text x="804.6" y="500" fill="#f3e6cf" stroke="#f3e6cf">lead</text><text x="2256.6" y="500" fill="#f3e6cf" stroke="#f3e6cf">lead</text><text x="2330.6" y="500" fill="#f3e6cf" stroke="#f3e6cf">lead</text><text x="804.6" y="572" fill="#f0dbf8" stroke="#f0dbf8">00</text><text x="1274.6" y="572" fill="#f0dbf8" stroke="#f0dbf8">0100</text><text x="1508.6" y="572" fill="#f0dbf8" stroke="#f0dbf8">00</text><text x="1596.6" y="572" fill="#f0dbf8" stroke="#f0dbf8">0607</text><text x="1714.6" y="572" fill="#f0dbf8" stroke="#f0dbf8">00</text><text x="1802.6" y="572" fill="#f0dbf8" stroke="#f0dbf8">0405</text><text x="1978.6" y="572" fill="#f0dbf8" stroke="#f0dbf8">0100</text><text x="2154.6" y="572" fill="#f0dbf8" stroke="#f0dbf8">00</text><text x="2418.6" y="572" fill="#f0dbf8" stroke="#f0dbf8">00</text><text x="2622.6" y="572" fill="#f0dbf8" stroke="#f0dbf8">0100</text><text x="878.6" y="644" fill="#f2edd2" stroke="#f2edd2">kick</text><text x="2212.6" y="644" fill="#f2edd2" stroke="#f2edd2">kick</text><text x="878.6" y="716" fill="#f2f3d4" stroke="#f2f3d4">snare</text><text x="878.6" y="788" fill="#eff3d2" stroke="#eff3d2">hats</text><text x="1038.6" y="860" fill="#ecf3d4" stroke="#ecf3d4">strings</text><text x="2036.6" y="860" fill="#ecf3d4" stroke="#ecf3d4">strings</text><text x="1390.6" y="932" fill="#e6f3d7" stroke="#e6f3d7">rimsho</text><text x="1508.6" y="932" fill="#e6f3d7" stroke="#e6f3d7">rimsho</text><text x="1978.6" y="932" fill="#e6f3d7" stroke="#e6f3d7">rims</text><text x="2446.6" y="932" fill="#e6f3d7" stroke="#e6f3d7">rimshot</text><text x="2622.6" y="932" fill="#e6f3d7" stroke="#e6f3d7">rimshot</text><text x="1274.6" y="1004" fill="#dff3de" stroke="#dff3de">bass</text><text x="1978.6" y="1004" fill="#dff3de" stroke="#dff3de">bass</text><text x="2622.6" y="1004" fill="#dff3de" stroke="#dff3de">bas</text><text x="2682.6" y="1004" fill="#dff3de" stroke="#dff3de">bass</text><text x="1522.6" y="1148" fill="#d9f3e7" stroke="#d9f3e7">water</text><text x="1626.6" y="1148" fill="#d9f3e7" stroke="#d9f3e7">water noise</text><text x="2006.6" y="1148" fill="#d9f3e7" stroke="#d9f3e7">wat</text><text x="2300.6" y="1148" fill="#d9f3e7" stroke="#d9f3e7">water noise</text><text x="2740.6" y="1148" fill="#d9f3e7" stroke="#d9f3e7">wat</text><text x="1596.6" y="1220" fill="#d9f2ee" stroke="#d9f2ee">laser zap</text><text x="1596.6" y="1292" fill="#d9f1f1" stroke="#d9f1f1">shaker</text><text x="2520.6" y="1508" fill="#e0e8f6" stroke="#e0e8f6">cowb</text></g>
<clipPath id="ac"><path d="M801.1 403L2793.8 403Q2799.8 403 2799.8 409L2799.8 461Q2799.8 467 2793.8 467L801.1 467Q795.1 467 795.1 461L795.1 409Q795.1 403 801.1 403Z"/></clipPath><path d="M801.1 401L2793.8 401Q2801.8 401 2801.8 409L2801.8 461Q2801.8 469 2793.8 469L801.1 469Q793.1 469 793.1 461L793.1 409Q793.1 401 801.1 401Z" fill="#eef2ff" stroke="#000" stroke-width="2"/><g clip-path="url(#ac)"><rect x="780" y="400" width="2040" height="38" fill="#d2dcfa"/><rect x="780" y="438" width="2040" height="30" fill="#4459a9"/><path d="M795.1 452.3V451.3h2V451.3h2V451.3h2V451.3h2V451.3h2V451.3h2V451.3h2V451.3h2V451.3h2V451.3h2V450h2V451.3h2V450h2V451.3h2V451.3h2V450h2V451.3h2V451.3h2V451.3h2V451.3h2V451.3h2V450h2V451.3h2V450h2V451.3h2V451.3h2V450h2V451.3h2V451.3h2V451.3h2V451.3h2V451.3h2V451.3h2V451.3h2V451.3h2V451.3h2V451.3h2V451.3h2V451.3h2V451.3h2V451.3h2V451.3h2V451.3h2V450h2V451.3h2V451.3h2V451.3h2V451.3h2V451.3h2V451.3h2V450h2V451.3h2V451.3h2V451.3h2V451.3h2V451.3h2V450h2V451.3h2V448.5h2V445.9h2V445.7h2V446.5h2V442.6h2V442.7h2V445.3h2V448.5h2V443h2V443.1h2V442.3h2V446.5h2V444.6h2V443h2V443.6h2V448.5h2V442.5h2V442.7h2V446.5h2V442.9h2V442.7h2V442.8h2V448.5h2V442.1h2V442.1h2V446.5h2V442.9h2V444.7h2V443h2V448.5h2V442.9h2V446.1h2V442.3h2V446.5h2V446.4h2V446.6h2V446.1h2V448.5h2V442.4h2V446.2h2V446.5h2V442.8h2V443.8h2V444h2V448.5h2V445.7h2V442.2h2V446.5h2V442.4h2V442.6h2V443.4h2V448.5h2V442.4h2V442.5h2V442.6h2V446.5h2V443.3h2V443.4h2V443.9h2V448.5h2V442.7h2V442.8h2V446.5h2V443.1h2V443.5h2V443.6h2V448.5h2V442.9h2V443h2V446.5h2V442.6h2V442.7h2V446h2V448.5h2V448.5h2V443h2V443.3h2V446.5h2V443.2h2V443.4h2V442.7h2V448.5h2V444.5h2V442.3h2V446.5h2V445.4h2V442.7h2V445.3h2V448.5h2V442.1h2V442.1h2V446.5h2V446h2V443.6h2V443.5h2V448.5h2V448.5h2V442.9h2V444.2h2V446.5h2V443.2h2V443.3h2V442.9h2V448.5h2V442.4h2V442.6h2V446.5h2V442.8h2V442.5h2V442.7h2V448.5h2V441.9h2V443.3h2V446.5h2V445.1h2V443.2h2V443.5h2V448.5h2V448.5h2V442.9h2V442.6h2V446.5h2V443.7h2V443.8h2V443.2h2V448.5h2V442.9h2V443.1h2V446.5h2V443.3h2V443.1h2V443.2h2V448.5h2V442.5h2V442.9h2V446.5h2V445.3h2V442.9h2V443.6h2V448.5h2V448.5h2V443h2V443.1h2V446.5h2V443.6h2V443.7h2V443.1h2V448.5h2V443.2h2V443.4h2V446.5h2V443.6h2V443.4h2V446.5h2V448.5h2V442.8h2V442.6h2V446.5h2V442.6h2V442.7h2V443.7h2V448.5h2V448.5h2V443.1h2V443.4h2V446.5h2V443.6h2V446.7h2V442.8h2V448.5h2V442.3h2V442.4h2V446.5h2V445.3h2V446.3h2V443.2h2V442.8h2V443.4h2V441.8h2V443.1h2V442.6h2V442.7h2V443.2h2V445.3h2V445.3h2V444.1h2V442h2V443.1h2V442.4h2V442.6h2V442.3h2V442.8h2V441.5h2V441.7h2V443.1h2V442h2V442.9h2V443.1h2V442.8h2V442.3h2V442.5h2V443.1h2V442.7h2V442.8h2V444h2V445.3h2V445.3h2V441.4h2V442.7h2V443.1h2V441.9h2V442.1h2V443.5h2V445.3h2V442.6h2V442.8h2V443.1h2V443h2V442.6h2V442.8h2V445.3h2V442h2V443h2V443.1h2V442.1h2V442.3h2V442.1h2V442.8h2V445.3h2V441.4h2V441.7h2V443.1h2V442.1h2V442.3h2V445.1h2V445.3h2V442.2h2V442.3h2V443.1h2V442.6h2V442.3h2V442.5h2V442.8h2V441.7h2V442.1h2V443.1h2V443h2V443.1h2V445.6h2V442.8h2V445.3h2V444.6h2V442.1h2V443.1h2V442.8h2V445.4h2V442.7h2V445.3h2V441.6h2V441.8h2V443.1h2V442.1h2V442.8h2V442.9h2V445.3h2V442.2h2V442.5h2V443.1h2V444.6h2V442.4h2V443.3h2V445.3h2V442.8h2V442.7h2V441.7h2V443.1h2V442.9h2V443h2V443.1h2V445.3h2V442.6h2V442.7h2V443.1h2V443h2V442.1h2V442.3h2V445.3h2V441.5h2V442.9h2V443.1h2V443.1h2V444.9h2V442.4h2V445.3h2V445.3h2V441.8h2V441.6h2V443.1h2V442.3h2V442.4h2V442.6h2V442.8h2V441.4h2V441.6h2V443.1h2V441.9h2V442.3h2V442.5h2V445.3h2V441.7h2V442.5h2V443.1h2V444.9h2V443.1h2V443.3h2V445.3h2V445.3h2V442.8h2V442.8h2V443.1h2V442.1h2V442.3h2V443.1h2V445.3h2V442.8h2V442.9h2V443.1h2V443.2h2V442.5h2V442.6h2V442.8h2V441.8h2V442.7h2V443.1h2V442.5h2V442.6h2V443.3h2V442.8h2V442.8h2V442.7h2V442.9h2V443.1h2V442.5h2V442.6h2V443.8h2V445.3h2V442.6h2V442.8h2V443.1h2V443h2V442.9h2V443h2V442.8h2V442.3h2V442.4h2V443.1h2V443.8h2V442.7h2V443.1h2V445.3h2V445.3h2V442.5h2V442h2V443.1h2V442.3h2V445h2V442.6h2V445.3h2V444.5h2V442.1h2V443.1h2V442.4h2V442.7h2V442.8h2V445.3h2V444.3h2V441.5h2V443.1h2V443.2h2V443.3h2V443h2V442.8h2V445.3h2V442.4h2V442.5h2V443.1h2V441.9h2V442h2V442.2h2V445.3h2V442h2V442.1h2V443.1h2V442.4h2V443.2h2V443.3h2V445.3h2V442.6h2V442.1h2V443.1h2V441.9h2V442.1h2V445.4h2V442.8h2V442.8h2V442.1h2V442.5h2V443.1h2V443h2V443.2h2V443.3h2V445.3h2V443.8h2V442h2V443.1h2V442.3h2V442.4h2V442.6h2V442.8h2V441.8h2V442.1h2V443.1h2V442.6h2V444.4h2V442.4h2V445.3h2V445.3h2V441.8h2V444.2h2V443.1h2V442.9h2V444.3h2V442.6h2V442.8h2V441.7h2V443.6h2V443.1h2V442.2h2V443.1h2V444.5h2V445.3h2V442.5h2V442.9h2V443.1h2V441.9h2V442h2V442.2h2V442.8h2V445.3h2V441.5h2V442.8h2V443.1h2V443.3h2V443.4h2V442.4h2V442.8h2V444.7h2V442.3h2V443.1h2V442.6h2V442.3h2V442.4h2V445.3h2V441.6h2V442.6h2V443.1h2V442.6h2V444.5h2V443.1h2V445.3h2V445.3h2V442.5h2V441.7h2V443.1h2V442.2h2V442.4h2V442.8h2V442.8h2V442.1h2V442.2h2V443.1h2V442.5h2V443.2h2V443.3h2V442.8h2V442.6h2V442.6h2V443.1h2V442.4h2V442.5h2V445.1h2V445.3h2V442.8h2V442.7h2V442.2h2V443.1h2V445.1h2V443h2V444.2h2V445.3h2V441.8h2V444.2h2V443.1h2V442.3h2V442.7h2V442.8h2V442.8h2V442.1h2V442.8h2V443.1h2V444.3h2V443.3h2V443.1h2V445.3h2V445.3h2V442.5h2V443h2V443.1h2V442.8h2V443h2V442.9h2V445.3h2V442.6h2V442.7h2V443.1h2V443h2V443h2V443.1h2V445.3h2V444.1h2V445h2V443.1h2V441.9h2V442h2V442.2h2V442.8h2V445.3h2V441.5h2V441.7h2V443.1h2V443.2h2V445.7h2V443.5h2V445.3h2V441.8h2V441.9h2V443.1h2V442.2h2V442.8h2V443h2V445.3h2V445h2V442.1h2V443.1h2V442.2h2V442.4h2V442.1h2V442.8h2V445.3h2V443.9h2V442.3h2V443.2h2V443.1h2V443.5h2V444.2h2V446.4h2V443.9h2V444.4h2V445.4h2V445.3h2V445.8h2V446.2h2V448h2V446.4h2V447h2V446.7h2V447.3h2V446.7h2V447.9h2V447.4h2V444.7h2V448.8h2V448.5h2V450h2V450.3h2V449.9h2V449.5h2V449.1h2V449.8h2V449.3h2V449h2V449.4h2V449.8h2V449.5h2V449.8h2V447.1h2V450.1h2V449.7h2V450h2V450.2h2V449.2h2V449.9h2V449.8h2V449.1h2V449.3h2V449.2h2V449.4h2V450.2h2V448.9h2V449.7h2V449h2V449.3h2V449.9h2V450.1h2V449.5h2V449.8h2V449.9h2V449.2h2V449.3h2V450.1h2V449h2V450.1h2V449.5h2V449.9h2V449.8h2V450.2h2V450.2h2V448.9h2V449.6h2V446.8h2V449.4h2V449h2V449.7h2V447.1h2V450.1h2V449.2h2V450.3h2V450.2h2V449.2h2V449.2h2V448.9h2V449.7h2V446.1h2V450h2V449.4h2V443.1h2V445.6h2V442.8h2V442.9h2V443.4h2V442.8h2V443h2V443.4h2V445.6h2V442.7h2V442.8h2V443.4h2V443.1h2V442.3h2V442.5h2V443.1h2V441.7h2V441.9h2V443.4h2V442.1h2V442.3h2V443.5h2V443.1h2V445.6h2V442.9h2V442.3h2V443.4h2V443.1h2V443.2h2V443.8h2V445.6h2V441.8h2V441.9h2V443.4h2V442.2h2V443.1h2V443.3h2V445.6h2V442.5h2V442h2V443.4h2V443.4h2V443.6h2V443.1h2V445.6h2V443.1h2V442.6h2V442.6h2V443.4h2V442.5h2V442.7h2V443.4h2V445.6h2V441.9h2V442.1h2V443.4h2V442.4h2V442.3h2V442.5h2V445.6h2V441.7h2V442.8h2V443.4h2V442.7h2V442.8h2V443.1h2V443.1h2V445.6h2V442.5h2V442.3h2V443.4h2V443.4h2V443.5h2V443.2h2V445.6h2V442.8h2V443h2V443.4h2V443.2h2V442.4h2V442.5h2V445.6h2V441.7h2V441.9h2V443.4h2V443.2h2V443.3h2V443.2h2V443.1h2V445.6h2V442.6h2V442.8h2V443.4h2V443.1h2V444.9h2V443.4h2V443.1h2V441.7h2V441.9h2V443.4h2V442.2h2V443.6h2V443.7h2V443.1h2V443h2V442.7h2V443.4h2V442.6h2V442.7h2V442.8h2V445.6h2V443.1h2V442.1h2V442.8h2V443.4h2V442.5h2V442.6h2V445.4h2V443.1h2V445h2V442.7h2V443.4h2V443h2V443.5h2V443.6h2V443.1h2V442.9h2V443h2V443.4h2V443.3h2V443.4h2V442.4h2V445.6h2V445.6h2V441.8h2V442.9h2V443.4h2V442.3h2V442.4h2V443.5h2V445.6h2V442.5h2V442.6h2V443.4h2V444.8h2V443.1h2V443.3h2V445.6h2V442.5h2V443.3h2V443.4h2V442.7h2V442.8h2V443.4h2V445.6h2V445.6h2V445.3h2V443h2V443.4h2V443h2V444.4h2V443.4h2V443.1h2V443.1h2V443.2h2V443.4h2V443.5h2V442.4h2V444.2h2V443.1h2V441.7h2V442.1h2V443.4h2V442.9h2V443h2V443.7h2V443.1h2V445.6h2V443.1h2V442.5h2V443.4h2V442.8h2V443h2V443.8h2V443.1h2V442.4h2V442.6h2V443.4h2V442.9h2V443.4h2V443.5h2V445.6h2V442.8h2V442.7h2V443.4h2V443.1h2V443.2h2V443h2V443.1h2V443.1h2V442.4h2V441.9h2V443.4h2V443.3h2V443.4h2V443.8h2V445.6h2V443h2V443.1h2V443.4h2V443.3h2V442.9h2V443.1h2V443.1h2V442.3h2V441.9h2V443.4h2V442.5h2V444.6h2V443.4h2V445.6h2V445.6h2V442.8h2V443.1h2V443.4h2V442.8h2V443h2V442.8h2V443.1h2V442h2V442.2h2V443.4h2V442.4h2V443.2h2V443.3h2V443.1h2V442.6h2V442.4h2V443.4h2V444.2h2V444.7h2V443.5h2V446.3h2V443.6h2V444h2V444.8h2V445.3h2V445.6h2V445.9h2V446.2h2V446h2V445.4h2V445.8h2V447h2V446.5h2V447.1h2V445.5h2V442.8h2V446.4h2V448.7h2V447.8h2V444.6h2V447.9h2V448.9h2V449.8h2V449.2h2V449.4h2V449.5h2V450.5h2V450.7h2V451h2V450.9h2V451.3h2V451.3h2V451.3h2V451.3h2V451.3h2V451.3h2V451.3h2V451.3h2V451.3h2V451.3h2V451.3h2V451.3h2V451.3h2V451.3h2V451.3h2V451.3h2V451.3h2V451.3h2V451.3h2V451.3h2V451.3h2V451.3h2V451.3h2V451.3h2V451.3h2V451.3h2V451.3h2V451.3h2V452.3V453.3h-2V453.3h-2V453.3h-2V453.3h-2V453.3h-2V453.3h-2V453.3h-2V453.3h-2V453.3h-2V453.3h-2V453.3h-2V453.3h-2V453.3h-2V453.3h-2V453.3h-2V453.3h-2V453.3h-2V453.3h-2V453.3h-2V453.3h-2V453.3h-2V453.3h-2V453.3h-2V453.3h-2V453.3h-2V453.3h-2V453.3h-2V453.3h-2V453.6h-2V453.5h-2V454h-2V454.2h-2V454.9h-2V455h-2V455.3h-2V454.6h-2V455.6h-2V457h-2V459.3h-2V457h-2V456.1h-2V457.7h-2V461h-2V459.2h-2V457.6h-2V458.2h-2V457.1h-2V459.4h-2V459.8h-2V459.1h-2V458.2h-2V458.8h-2V459.1h-2V459.3h-2V459.7h-2V460.6h-2V461.1h-2V457.8h-2V461.6h-2V460.6h-2V459.7h-2V460.9h-2V463.1h-2V461.2h-2V460.7h-2V462.1h-2V462.2h-2V462.3h-2V462h-2V462.9h-2V462.5h-2V461.3h-2V461h-2V462.4h-2V461.8h-2V461.4h-2V462.1h-2V462.5h-2V458.7h-2V458.7h-2V460.6h-2V459.7h-2V461.6h-2V461.8h-2V462.3h-2V462h-2V462.3h-2V461.7h-2V460.9h-2V460.7h-2V461.7h-2V460.8h-2V462.1h-2V458.8h-2V460.9h-2V461.8h-2V460.6h-2V461.2h-2V462.6h-2V462.3h-2V461.4h-2V461.3h-2V460.8h-2V461.8h-2V461.1h-2V462.1h-2V461.8h-2V462.4h-2V458.9h-2V461.2h-2V460.6h-2V461.9h-2V461.6h-2V461.2h-2V461.9h-2V462.3h-2V460.6h-2V461.6h-2V461h-2V461.1h-2V461.5h-2V462.3h-2V458.5h-2V461.6h-2V461.5h-2V462h-2V461h-2V461h-2V463h-2V462h-2V462.4h-2V460.3h-2V462.4h-2V460.3h-2V462h-2V461.5h-2V460.7h-2V461.8h-2V461.8h-2V460.7h-2V461.9h-2V461.8h-2V461.5h-2V458.9h-2V459.4h-2V459h-2V461.4h-2V461.5h-2V461.7h-2V460.3h-2V462.2h-2V462h-2V458.7h-2V461h-2V460.7h-2V459.9h-2V461.8h-2V461.1h-2V462h-2V458.9h-2V460.7h-2V462h-2V462.3h-2V461.9h-2V462h-2V463.7h-2V458.7h-2V458.9h-2V462.9h-2V460.8h-2V460.5h-2V461.6h-2V462h-2V460.8h-2V462.4h-2V461.2h-2V461.2h-2V462.3h-2V461.8h-2V461.8h-2V459.6h-2V461.1h-2V458.9h-2V462.1h-2V462.1h-2V460.5h-2V461.8h-2V461.5h-2V462.3h-2V458.4h-2V461.1h-2V462.5h-2V462.5h-2V460.6h-2V461.1h-2V460.9h-2V461h-2V460.4h-2V460.8h-2V463.4h-2V461.5h-2V463.4h-2V463.7h-2V461.7h-2V460.9h-2V459.6h-2V462.3h-2V461.5h-2V462.2h-2V461.2h-2V458.5h-2V461.7h-2V462h-2V460.8h-2V460.8h-2V461.5h-2V463.1h-2V462.7h-2V458.9h-2V462h-2V462.7h-2V461.3h-2V461.8h-2V461.2h-2V461.4h-2V459.3h-2V462.2h-2V460.9h-2V461.1h-2V461h-2V461.9h-2V462.4h-2V458.6h-2V461.7h-2V460.8h-2V462.2h-2V461.3h-2V460.8h-2V462.1h-2V461.9h-2V459.3h-2V462.6h-2V462.6h-2V461.4h-2V461.4h-2V463.2h-2V462h-2V459.5h-2V460.4h-2V461.3h-2V462.9h-2V461.8h-2V462.5h-2V462.6h-2V460.7h-2V458.7h-2V462.1h-2V461.6h-2V461.5h-2V462.1h-2V462.6h-2V462.9h-2V459.5h-2V461.3h-2V460.8h-2V463.3h-2V460.9h-2V463.1h-2V462.7h-2V459.2h-2V460.7h-2V461.4h-2V461.7h-2V461.1h-2V462.6h-2V462.3h-2V459.1h-2V461.8h-2V461.8h-2V462.6h-2V462.8h-2V460.9h-2V462.1h-2V463.3h-2V460.9h-2V462h-2V463.2h-2V460.8h-2V460.9h-2V462.5h-2V462.8h-2V458.9h-2V460.3h-2V461h-2V461.2h-2V461.6h-2V461.2h-2V461h-2V459.6h-2V461.3h-2V455.1h-2V454.6h-2V458.6h-2V454.8h-2V456h-2V455.6h-2V455.3h-2V454.5h-2V454.5h-2V455.4h-2V454.4h-2V457.2h-2V455.1h-2V455.9h-2V455.1h-2V457.9h-2V455.2h-2V455.9h-2V454.4h-2V454.3h-2V454.6h-2V454.7h-2V455.2h-2V454.3h-2V455.6h-2V454.4h-2V455.5h-2V455.3h-2V454.8h-2V454.9h-2V455h-2V454.3h-2V455h-2V455h-2V455.3h-2V454.9h-2V455.8h-2V454.5h-2V455.1h-2V455.3h-2V455.5h-2V455.4h-2V455h-2V454.6h-2V455.6h-2V454.4h-2V454.7h-2V454.9h-2V454.3h-2V457h-2V454.8h-2V454.9h-2V455h-2V455.2h-2V455.4h-2V455.4h-2V454.7h-2V455.4h-2V455.1h-2V454.7h-2V454.3h-2V454.5h-2V455.9h-2V455.7h-2V459.3h-2V457.1h-2V456.5h-2V458.1h-2V457.7h-2V458.5h-2V457.3h-2V458.3h-2V456.4h-2V458.1h-2V458.8h-2V458.7h-2V458.6h-2V460h-2V459.9h-2V458.5h-2V459.9h-2V460.3h-2V461.8h-2V461.2h-2V461.6h-2V460.4h-2V459.1h-2V461h-2V461.9h-2V462.5h-2V461.8h-2V461.1h-2V463.5h-2V459.8h-2V458.9h-2V461.2h-2V462.5h-2V462.8h-2V460.9h-2V461.9h-2V463.3h-2V458.7h-2V460.9h-2V459.1h-2V460.9h-2V461.5h-2V463.4h-2V462.2h-2V459h-2V462.6h-2V463h-2V461.9h-2V462.2h-2V461.3h-2V459.2h-2V460.3h-2V459.1h-2V462.2h-2V462.6h-2V461.6h-2V460.9h-2V461.3h-2V461.4h-2V459.6h-2V462.3h-2V462.4h-2V462.5h-2V460.7h-2V461.9h-2V462.3h-2V459h-2V459.9h-2V461h-2V460.9h-2V460.7h-2V461.4h-2V461.5h-2V463.3h-2V461h-2V461.7h-2V462.8h-2V461.4h-2V461h-2V460.2h-2V463.4h-2V458.8h-2V459.8h-2V461.2h-2V459.7h-2V460.8h-2V461.8h-2V462h-2V461h-2V458.9h-2V459.4h-2V461.5h-2V462.4h-2V460.6h-2V462h-2V462h-2V462.4h-2V461.8h-2V460.9h-2V462.6h-2V462.3h-2V462.4h-2V463.2h-2V462.4h-2V461.5h-2V461.6h-2V463.2h-2V461.4h-2V461.9h-2V461.4h-2V458.9h-2V459.6h-2V460.7h-2V459.7h-2V462.1h-2V462.4h-2V461.2h-2V463.3h-2V459h-2V462.4h-2V462.7h-2V462.3h-2V460.9h-2V461.7h-2V459.6h-2V462.7h-2V461.5h-2V461.9h-2V461.8h-2V462.2h-2V461.3h-2V463.7h-2V458.8h-2V461.6h-2V461.8h-2V462.2h-2V462.7h-2V461.5h-2V461.3h-2V461.2h-2V459.1h-2V460.6h-2V461.2h-2V461.4h-2V461.6h-2V460.4h-2V463.7h-2V461.3h-2V461.8h-2V461h-2V461.2h-2V461h-2V460.4h-2V462.8h-2V458.7h-2V459.4h-2V462.6h-2V460.9h-2V461.7h-2V461.5h-2V462.5h-2V462.7h-2V462.5h-2V463h-2V462.7h-2V462.5h-2V461.4h-2V462.8h-2V460.2h-2V459h-2V460.8h-2V461.6h-2V460.9h-2V460.6h-2V462.7h-2V463h-2V461.5h-2V462.7h-2V458.8h-2V461.9h-2V462.8h-2V461.1h-2V463.2h-2V462.6h-2V459.8h-2V461.4h-2V461.5h-2V463.1h-2V461.4h-2V462.2h-2V462.2h-2V458.9h-2V461.7h-2V461.9h-2V463.2h-2V461.9h-2V461.4h-2V462.3h-2V459.6h-2V462h-2V462.2h-2V460.6h-2V461.1h-2V461.7h-2V463.5h-2V460.6h-2V459.1h-2V461.6h-2V462.4h-2V462h-2V460.7h-2V462.3h-2V459.5h-2V459.7h-2V461.4h-2V459h-2V463h-2V461.6h-2V463.6h-2V461.5h-2V459.5h-2V459h-2V461.6h-2V462.1h-2V461.3h-2V461.6h-2V461.7h-2V461.3h-2V462.5h-2V461.5h-2V461h-2V461.9h-2V461.1h-2V461h-2V461.6h-2V459.3h-2V460.3h-2V461.8h-2V461.7h-2V462.3h-2V461.6h-2V462.3h-2V461h-2V462.5h-2V460.4h-2V462.1h-2V463.1h-2V462.2h-2V461.4h-2V462.1h-2V462.2h-2V461.7h-2V461.2h-2V462.3h-2V461.5h-2V461.7h-2V462.4h-2V458.9h-2V462.3h-2V463.2h-2V462h-2V461.6h-2V461.4h-2V461.4h-2V458.9h-2V459.6h-2V460.8h-2V460.6h-2V459.8h-2V462h-2V462.4h-2V462h-2V459h-2V461.5h-2V462h-2V462h-2V461.3h-2V463.7h-2V463.2h-2V462.6h-2V462.6h-2V462.8h-2V463.2h-2V461.6h-2V463h-2V462.5h-2V459.6h-2V459.6h-2V461.7h-2V459.2h-2V462.2h-2V460.7h-2V462.3h-2V463.7h-2V459.9h-2V462.4h-2V461.5h-2V462.1h-2V461.6h-2V462.5h-2V462.6h-2V459.1h-2V461.3h-2V461.1h-2V462.6h-2V461.1h-2V463.6h-2V462.7h-2V462h-2V458.7h-2V461.7h-2V461.8h-2V460.3h-2V461h-2V461.3h-2V462.8h-2V459.3h-2V460.9h-2V461h-2V463.4h-2V461.6h-2V462.4h-2V463.3h-2V458.9h-2V461.3h-2V459.6h-2V462.4h-2V461h-2V462.4h-2V460.1h-2V458.7h-2V461.1h-2V458.9h-2V462.2h-2V462.5h-2V462h-2V462.8h-2V463.3h-2V461.6h-2V462.7h-2V461.5h-2V462.9h-2V461.5h-2V462.8h-2V462.6h-2V459.5h-2V459h-2V462.2h-2V461.7h-2V462.4h-2V462.9h-2V463.2h-2V459.9h-2V461.7h-2V461.6h-2V461.4h-2V463.3h-2V460.9h-2V460.8h-2V462.2h-2V458.9h-2V462.1h-2V461.7h-2V461.4h-2V460.7h-2V462h-2V461.3h-2V459.8h-2V461.6h-2V463.2h-2V463.7h-2V461.5h-2V462h-2V462.3h-2V458.8h-2V459.1h-2V461h-2V462.3h-2V462.2h-2V461.6h-2V462.3h-2V462.6h-2V461.3h-2V461.8h-2V460.8h-2V461.7h-2V461.3h-2V463.5h-2V463.5h-2V461.6h-2V462.9h-2V461.5h-2V463.1h-2V461.3h-2V462.9h-2V461h-2V459.3h-2V458.8h-2V461.8h-2V462.5h-2V461.1h-2V461.5h-2V462.7h-2V461.1h-2V461.1h-2V462.3h-2V458h-2V459.3h-2V457.7h-2V461.3h-2V462.7h-2V456.1h-2V461.1h-2V458.2h-2V461.3h-2V458.5h-2V461.1h-2V461.1h-2V455.9h-2V455.8h-2V461.6h-2V462.7h-2V461.7h-2V458.4h-2V461.5h-2V462.5h-2V456.2h-2V458.3h-2V461.3h-2V460.9h-2V457.8h-2V460.8h-2V460.7h-2V456.2h-2V461.2h-2V460.4h-2V460.2h-2V458.6h-2V461.7h-2V461.5h-2V456.4h-2V456.1h-2V460.4h-2V462.5h-2V459.1h-2V458.1h-2V461.8h-2V462.1h-2V455.8h-2V461.6h-2V461.6h-2V461.3h-2V458.6h-2V461h-2V462.3h-2V456.2h-2V462h-2V461.2h-2V461h-2V458.7h-2V462h-2V462.3h-2V456.1h-2V455.9h-2V460.5h-2V460.8h-2V458.9h-2V458.5h-2V461.3h-2V462.4h-2V456.4h-2V461.6h-2V462.1h-2V462.5h-2V458.4h-2V462.3h-2V462.6h-2V456.1h-2V462.6h-2V461.4h-2V462.2h-2V457.7h-2V460.8h-2V462.2h-2V456.3h-2V456.2h-2V461.1h-2V460.6h-2V458.9h-2V458.1h-2V461.9h-2V463.1h-2V456.2h-2V459.2h-2V461.2h-2V458.6h-2V457.6h-2V462.9h-2V460.2h-2V455.8h-2V461.1h-2V461.9h-2V461.4h-2V457.8h-2V460.9h-2V461.2h-2V456.3h-2V456.4h-2V459h-2V462h-2V462.8h-2V458.1h-2V461h-2V462.4h-2V456.2h-2V461.7h-2V460.6h-2V460.6h-2V458.6h-2V462h-2V462.3h-2V456.2h-2V459.9h-2V461.8h-2V461.5h-2V458.4h-2V462.7h-2V461.3h-2V462.4h-2V456.2h-2V461.9h-2V462.7h-2V462.5h-2V458.5h-2V462.8h-2V459.2h-2V456.5h-2V460.3h-2V460.7h-2V462.6h-2V458.6h-2V457.8h-2V462.3h-2V456.5h-2V459h-2V457.8h-2V458.2h-2V458.6h-2V461.8h-2V458.6h-2V462.1h-2V456.2h-2V462.2h-2V459.5h-2V461h-2V458.6h-2V463.4h-2V463h-2V455.9h-2V462.4h-2V461.2h-2V461.8h-2V458.7h-2V461.8h-2V462.3h-2V455.8h-2V460.3h-2V462.1h-2V459.5h-2V458.6h-2V462.1h-2V461.1h-2V462.5h-2V456.1h-2V458.8h-2V461.3h-2V462.1h-2V457.6h-2V458.4h-2V459.3h-2V456.3h-2V453.3h-2V454.6h-2V453.3h-2V453.3h-2V453.3h-2V453.3h-2V453.3h-2V454.6h-2V453.3h-2V453.3h-2V453.3h-2V453.3h-2V453.3h-2V453.3h-2V454.6h-2V453.3h-2V453.3h-2V453.3h-2V453.3h-2V453.3h-2V453.3h-2V453.3h-2V453.3h-2V453.3h-2V453.3h-2V453.3h-2V453.3h-2V453.3h-2V453.3h-2V453.3h-2V453.3h-2V454.6h-2V453.3h-2V453.3h-2V454.6h-2V453.3h-2V454.6h-2V453.3h-2V453.3h-2V453.3h-2V453.3h-2V453.3h-2V454.6h-2V453.3h-2V453.3h-2V454.6h-2V453.3h-2V454.6h-2V453.3h-2V453.3h-2V453.3h-2V453.3h-2V453.3h-2V453.3h-2V453.3h-2V453.3h-2V453.3h-2V453.3h-2Z" fill="#d2dcfa" shape-rendering="crispEdges"/></g>
<text x="804.6" y="427.500" font-size="22.500" letter-spacing=".45" fill="#1f2d6c" stroke="#1f2d6c" stroke-width=".4">ageispolis</text><circle cx="932" cy="419" r="8" fill="none" stroke="#1f2d6c" stroke-width="2"/><circle cx="943.500" cy="419" r="8" fill="none" stroke="#1f2d6c" stroke-width="2"/>
<path d="M766 364h26.500a3 3 0 0 1 3 3v15.500a3 3 0 0 1-.9 2.100l-12.700 12.700a3.700 3.700 0 0 1-5.300 0l-12.700-12.700a3 3 0 0 1-.9-2.100v-15.500a3 3 0 0 1 3-3z" fill="#b2b2b2"/><rect x="776.600" y="398" width="5" height="1261" fill="#000" opacity=".45"/><rect x="777.600" y="371" width="3" height="1288" fill="#fff"/>
<rect x="760" y="1659" width="2130" height="29" fill="#383838"/><rect x="760" y="1659" width="2100" height="1.500" fill="#2c2c2c"/><rect x="2860" y="1659" width="30" height="29" fill="#303030"/><rect x="765.500" y="1666" width="1784" height="16" rx="8" fill="#747474"/><rect x="2868" y="406" width="16" height="1160" rx="8" fill="#747474"/><rect x="759" y="1659" width="1.500" height="29" fill="#2e2e2e"/></svg>
</div></div>
</body></html>
